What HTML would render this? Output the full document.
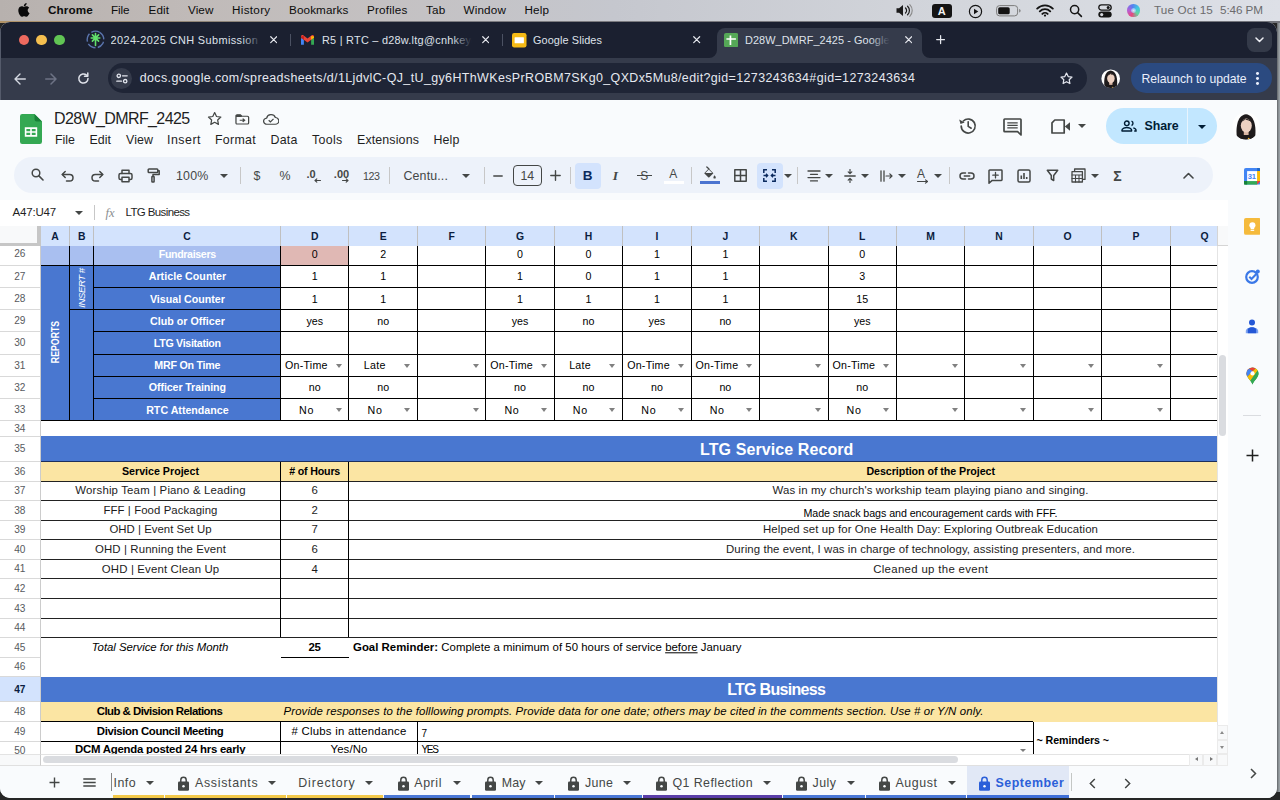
<!DOCTYPE html><html lang="en"><head><meta charset="utf-8"><title>D28W_DMRF_2425 - Google Sheets</title><style>
*{box-sizing:border-box;margin:0;padding:0}
html,body{width:1280px;height:800px;overflow:hidden}
body{background:#2a2a2c;font-family:"Liberation Sans",sans-serif;position:relative;color:#1f1f1f}
.a{position:absolute}
.t{position:absolute;white-space:nowrap;line-height:1;transform:translateY(-50%)}
#menubar{position:absolute;left:0;top:0;width:1280px;height:21px;background:linear-gradient(90deg,#b7b1ae 0%,#c0bab8 15%,#c4c1c2 30%,#c5c7ce 48%,#d3d6dc 75%,#dde0e7 100%)}
#gap{position:absolute;left:0;top:21px;width:1280px;height:1.500px;background:linear-gradient(90deg,#b39468 0%,#9a8a72 8%,#7d7c80 30%,#73757c 100%)}
#desk{position:absolute;left:0;top:21.5px;width:1280px;height:779px;background:#262626}
#deskr{position:absolute;left:1276.500px;top:21.500px;width:3.500px;height:770px;background:linear-gradient(90deg,#6f7377 0,#6f7377 35%,#9aa0a4 60%)}
#win{position:absolute;left:0;top:0;width:1277px;height:798px;clip-path:inset(22px 0 0 0 round 10px);background:#f9fbfd}
#tabstrip{position:absolute;left:0;top:22px;width:100%;height:36px;background:#1b2030}
#ctool{position:absolute;left:0;top:58px;width:100%;height:41.5px;background:#353b4b}
#grid{position:absolute;left:0;top:225.5px;width:1217px;height:528.5px;overflow:hidden;background:#fff}
#grid .in{position:absolute;left:0;top:-225.5px;width:1600px;height:800px}
.c{position:absolute}
.hl{position:absolute;height:1px;background:#000}
.vl{position:absolute;width:1px;background:#000}
</style></head><body>
<div id="desk"></div><div id="deskr"></div><div id="gap"></div>
<div id="menubar">
<svg class="a" style="left:17.200px;top:3.300px" width="13.800" height="13.800" viewBox="0 0 24 24"><path fill="#0a0a0a" d="M12.152 6.896c-.948 0-2.415-1.078-3.96-1.04-2.04.027-3.91 1.183-4.961 3.014-2.117 3.675-.546 9.103 1.519 12.09 1.013 1.454 2.208 3.09 3.792 3.039 1.52-.065 2.09-.987 3.935-.987 1.831 0 2.35.987 3.96.948 1.637-.026 2.676-1.48 3.676-2.948 1.156-1.688 1.636-3.325 1.662-3.415-.039-.013-3.182-1.221-3.22-4.857-.026-3.04 2.48-4.494 2.597-4.559-1.429-2.09-3.623-2.324-4.39-2.376-2-.156-3.675 1.09-4.61 1.09zM15.53 3.83c.843-1.012 1.4-2.427 1.245-3.83-1.207.052-2.662.805-3.532 1.818-.78.896-1.454 2.338-1.273 3.714 1.338.104 2.715-.688 3.559-1.701"/></svg>
<span class="t" style="left:48.00px;top:9.60px;color:#0c0c0c;font-size:11.7px;font-weight:bold;font-style:normal;letter-spacing:0.138px;transform:translate(0,-50%);">Chrome</span>
<span class="t" style="left:111.00px;top:9.60px;color:#0c0c0c;font-size:11.7px;font-weight:normal;font-style:normal;letter-spacing:-0.086px;transform:translate(0,-50%);">File</span>
<span class="t" style="left:148.50px;top:9.60px;color:#0c0c0c;font-size:11.7px;font-weight:normal;font-style:normal;letter-spacing:0.090px;transform:translate(0,-50%);">Edit</span>
<span class="t" style="left:188.00px;top:9.60px;color:#0c0c0c;font-size:11.7px;font-weight:normal;font-style:normal;letter-spacing:0.094px;transform:translate(0,-50%);">View</span>
<span class="t" style="left:232.00px;top:9.60px;color:#0c0c0c;font-size:11.7px;font-weight:normal;font-style:normal;letter-spacing:0.304px;transform:translate(0,-50%);">History</span>
<span class="t" style="left:289.00px;top:9.60px;color:#0c0c0c;font-size:11.7px;font-weight:normal;font-style:normal;letter-spacing:0.115px;transform:translate(0,-50%);">Bookmarks</span>
<span class="t" style="left:367.00px;top:9.60px;color:#0c0c0c;font-size:11.7px;font-weight:normal;font-style:normal;letter-spacing:0.189px;transform:translate(0,-50%);">Profiles</span>
<span class="t" style="left:426.00px;top:9.60px;color:#0c0c0c;font-size:11.7px;font-weight:normal;font-style:normal;letter-spacing:0.219px;transform:translate(0,-50%);">Tab</span>
<span class="t" style="left:463.50px;top:9.60px;color:#0c0c0c;font-size:11.7px;font-weight:normal;font-style:normal;letter-spacing:0.154px;transform:translate(0,-50%);">Window</span>
<span class="t" style="left:524.50px;top:9.60px;color:#0c0c0c;font-size:11.7px;font-weight:normal;font-style:normal;letter-spacing:0.113px;transform:translate(0,-50%);">Help</span>
<span class="t" style="left:1154.00px;top:9.80px;color:#6b6b6d;font-size:11.7px;font-weight:normal;font-style:normal;letter-spacing:0.161px;transform:translate(0,-50%);">Tue Oct 15</span>
<span class="t" style="left:1220.00px;top:9.80px;color:#6b6b6d;font-size:11.7px;font-weight:normal;font-style:normal;letter-spacing:-0.076px;transform:translate(0,-50%);">5:46 PM</span>
<svg class="a" style="left:895px;top:3px" width="20" height="15" viewBox="0 0 20 15"><path d="M1.5 5.2h2.6L8 2v11L4.1 9.8H1.5z" fill="#1a1a1a"/><path d="M10.5 5a3.4 3.4 0 0 1 0 5M12.6 3.2a6 6 0 0 1 0 8.6" fill="none" stroke="#1a1a1a" stroke-width="1.2" stroke-linecap="round"/><path d="M14.8 1.6a8.4 8.4 0 0 1 0 11.8" fill="none" stroke="#8a8a8a" stroke-width="1.1" stroke-linecap="round"/></svg>
<div class="a" style="left:932px;top:3.6px;width:19.5px;height:14.2px;border-radius:3px;background:#141414"></div>
<span class="t" style="left:941.80px;top:10.90px;color:#f2f2f2;font-size:11px;font-weight:bold;font-style:normal;letter-spacing:0.000px;transform:translate(-50%,-50%);">A</span>
<svg class="a" style="left:967.500px;top:3.500px" width="15" height="15" viewBox="0 0 15 15"><circle cx="7.5" cy="7.5" r="6.1" fill="none" stroke="#141414" stroke-width="1.2"/><path d="M6 4.7l4.3 2.8L6 10.3z" fill="#141414"/></svg>
<svg class="a" style="left:996px;top:5px" width="26" height="12" viewBox="0 0 26 12"><rect x=".6" y=".6" width="21" height="10.3" rx="3" fill="none" stroke="#7c7c7c" stroke-width="1"/><rect x="2.2" y="2.2" width="11.5" height="7.1" rx="1.6" fill="#141414"/><path d="M23.2 4v3.6c.9-.3 1.4-1 1.400-1.800s-.5-1.500-1.400-1.800z" fill="#7c7c7c"/></svg>
<svg class="a" style="left:1036px;top:4px" width="18" height="13" viewBox="0 0 18 13"><path d="M1.2 4.6a11 11 0 0 1 15.6 0M3.800 7.300a7.300 7.300 0 0 1 10.400 0M6.400 9.900a3.700 3.700 0 0 1 5.200 0" fill="none" stroke="#141414" stroke-width="1.9" stroke-linecap="round"/><circle cx="9" cy="11.600" r="1.1" fill="#141414"/></svg>
<svg class="a" style="left:1068.5px;top:4px" width="14" height="14" viewBox="0 0 14 14"><circle cx="5.6" cy="5.6" r="4.1" fill="none" stroke="#141414" stroke-width="1.5"/><path d="M8.700 8.700l3.700 3.700" stroke="#141414" stroke-width="1.6" stroke-linecap="round"/></svg>
<svg class="a" style="left:1098px;top:4px" width="14" height="14" viewBox="0 0 14 14"><rect x=".8" y=".8" width="12.4" height="5.4" rx="2.7" fill="none" stroke="#141414" stroke-width="1.3"/><circle cx="10.2" cy="3.5" r="1.5" fill="#141414"/><rect x=".3" y="7.600" width="13.4" height="6" rx="3" fill="#141414"/><circle cx="3.700" cy="10.600" r="1.600" fill="#d6d8de"/></svg>
<div class="a" style="left:1127px;top:4.3px;width:12.600px;height:12.600px;border-radius:50%;background:conic-gradient(from 200deg,#e8487c,#b55fd6,#5a7cf0,#3fc6e0,#62d6a0,#e8487c)"></div><div class="a" style="left:1130.500px;top:7.800px;width:5.600px;height:5.600px;border-radius:50%;background:radial-gradient(#fff,#9fd0ff 60%,rgba(255,255,255,0) 100%);opacity:.75"></div>
</div>
<div id="win"><div id="tabstrip"></div><div id="ctool"></div>
<div class="a" style="left:18.6px;top:34.6px;width:10.800px;height:10.800px;border-radius:50%;background:#ee6a5f"></div>
<div class="a" style="left:36.3px;top:34.6px;width:10.800px;height:10.800px;border-radius:50%;background:#f5bf4f"></div>
<div class="a" style="left:54.1px;top:34.6px;width:10.800px;height:10.800px;border-radius:50%;background:#61c554"></div>
<div class="a" style="left:716.700px;top:28px;width:205.500px;height:30px;background:#353b4b;border-radius:8px 8px 0 0"></div>
<svg class="a" style="left:708.700px;top:50px" width="8" height="8" viewBox="0 0 8 8"><path d="M8 0v8H0a8 8 0 0 0 8-8z" fill="#353b4b"/></svg>
<svg class="a" style="left:922.200px;top:50px" width="8" height="8" viewBox="0 0 8 8"><path d="M0 0v8h8a8 8 0 0 1-8-8z" fill="#353b4b"/></svg>
<div class="a" style="left:290.0px;top:33.700px;width:1.1px;height:12.600px;background:#4b5162"></div>
<div class="a" style="left:501.5px;top:33.700px;width:1.1px;height:12.600px;background:#4b5162"></div>
<svg class="a" style="left:86.400px;top:30.300px" width="19" height="19" viewBox="0 0 19 19"><circle cx="9.500" cy="9.500" r="8.300" fill="none" stroke="#5a74ad" stroke-width="1.400" stroke-dasharray="8.500 2.300" transform="rotate(-60 9.500 9.500)"/><g stroke="#62e06c" stroke-width="1.600" stroke-linecap="round"><path d="M9.500 3.600v11.800M5.200 8h8.600M6.400 4.900l6.200 6.200M12.600 4.900l-6.200 6.200"/></g></svg>
<svg class="a" style="left:301px;top:35px" width="13" height="9.800" viewBox="0 0 14 10.600" preserveAspectRatio="none"><path d="M0 1.500v9h3.100V5.200L0 2.900z" fill="#4285f4"/><path d="M14 1.500v9h-3.100V5.200L14 2.900z" fill="#34a853"/><path d="M0 1.600C0 .3 1.500-.4 2.500.4L7 3.800 11.500.4c1-.8 2.500-.1 2.500 1.200v1.300L7 8.100 0 2.900z" fill="#ea4335"/><path d="M0 1.600v1.300l3.100 2.300V1z" fill="#c5221f"/><path d="M14 1.600v1.300l-3.100 2.300V1z" fill="#fbbc04"/></svg>
<svg class="a" style="left:512px;top:33px" width="14.500" height="14.500" viewBox="0 0 14.500 14.500"><rect width="14.500" height="14.500" rx="2.200" fill="#f5ba15"/><rect x="2.600" y="4.200" width="9.300" height="6.100" rx=".5" fill="#fff"/></svg>
<svg class="a" style="left:723.700px;top:33px" width="14.300" height="14.300" viewBox="0 0 14.300 14.300"><rect width="14.300" height="14.300" rx="2" fill="#55a857"/><path d="M5.600 2.400h1.700v9.500H5.600zM2.400 5.200h9.500v1.600H2.400z" fill="#fff"/></svg>
<div class="a" style="left:110.5px;top:31px;width:153px;height:18px;overflow:hidden">
<span class="t" style="left:0.00px;top:9.30px;color:#dfe2ea;font-size:10.9px;font-weight:normal;font-style:normal;letter-spacing:0.402px;transform:translate(0,-50%);">2024-2025 CNH Submission Site</span>
<div class="a" style="right:0;top:0;width:22px;height:18px;background:linear-gradient(90deg,rgba(0,0,0,0),#1b2030 90%)"></div></div>
<div class="a" style="left:322px;top:31px;width:152px;height:18px;overflow:hidden">
<span class="t" style="left:0.00px;top:9.30px;color:#dfe2ea;font-size:10.9px;font-weight:normal;font-style:normal;letter-spacing:0.254px;transform:translate(0,-50%);">R5 | RTC – d28w.ltg@cnhkeyclub.org</span>
<div class="a" style="right:0;top:0;width:22px;height:18px;background:linear-gradient(90deg,rgba(0,0,0,0),#1b2030 90%)"></div></div>
<div class="a" style="left:533px;top:31px;width:150px;height:18px;overflow:hidden">
<span class="t" style="left:0.00px;top:9.30px;color:#dfe2ea;font-size:10.9px;font-weight:normal;font-style:normal;letter-spacing:0.091px;transform:translate(0,-50%);">Google Slides</span>
<div class="a" style="right:0;top:0;width:22px;height:18px;background:linear-gradient(90deg,rgba(0,0,0,0),#1b2030 90%)"></div></div>
<div class="a" style="left:745px;top:31px;width:147px;height:18px;overflow:hidden">
<span class="t" style="left:0.00px;top:9.30px;color:#dfe2ea;font-size:10.9px;font-weight:normal;font-style:normal;letter-spacing:0.074px;transform:translate(0,-50%);">D28W_DMRF_2425 - Google Sheets</span>
<div class="a" style="right:0;top:0;width:22px;height:18px;background:linear-gradient(90deg,rgba(0,0,0,0),#353b4b 90%)"></div></div>
<svg class="a" style="left:270.0px;top:36.300px" width="7.400" height="7.400" viewBox="0 0 8 8"><path d="M.8.800l6.400 6.400M7.200.800L.8 7.200" stroke="#e6e8ee" stroke-width="1.300" stroke-linecap="round"/></svg>
<svg class="a" style="left:481.5px;top:36.300px" width="7.400" height="7.400" viewBox="0 0 8 8"><path d="M.8.800l6.400 6.400M7.200.800L.8 7.200" stroke="#e6e8ee" stroke-width="1.300" stroke-linecap="round"/></svg>
<svg class="a" style="left:693.3px;top:36.300px" width="7.400" height="7.400" viewBox="0 0 8 8"><path d="M.8.800l6.400 6.400M7.200.800L.8 7.200" stroke="#e6e8ee" stroke-width="1.300" stroke-linecap="round"/></svg>
<svg class="a" style="left:905.0px;top:36.300px" width="7.400" height="7.400" viewBox="0 0 8 8"><path d="M.8.800l6.400 6.400M7.200.800L.8 7.200" stroke="#e6e8ee" stroke-width="1.300" stroke-linecap="round"/></svg>
<svg class="a" style="left:935.900px;top:35.400px" width="9.200" height="9.200" viewBox="0 0 11 11"><path d="M5.500.800v9.400M.8 5.500h9.400" stroke="#e6e8ee" stroke-width="1.500" stroke-linecap="round"/></svg>
<div class="a" style="left:1247px;top:27.700px;width:25px;height:24.500px;border-radius:7.500px;background:#343a49"></div>
<svg class="a" style="left:1255px;top:37px" width="9" height="6" viewBox="0 0 9 6"><path d="M1 1l3.500 3.500L8 1" fill="none" stroke="#eef0f5" stroke-width="1.500" stroke-linecap="round" stroke-linejoin="round"/></svg>
<svg class="a" style="left:13.500px;top:72.500px" width="12" height="12" viewBox="0 0 12 12"><path d="M6 1L1 6l5 5M1.300 6H11.300" fill="none" stroke="#d5d9e2" stroke-width="1.350" stroke-linecap="round" stroke-linejoin="round"/></svg>
<svg class="a" style="left:45px;top:72.500px" width="12" height="12" viewBox="0 0 12 12"><path d="M6 1l5 5-5 5M10.700 6H.7" fill="none" stroke="#6d7385" stroke-width="1.500" stroke-linecap="round" stroke-linejoin="round"/></svg>
<svg class="a" style="left:77px;top:71.500px" width="13" height="13" viewBox="0 0 13 13"><path d="M11 6.500a4.600 4.600 0 1 1-1.500-3.400" fill="none" stroke="#dfe2ea" stroke-width="1.500" stroke-linecap="round"/><path d="M10.800 1v3.300H7.500" fill="none" stroke="#dfe2ea" stroke-width="1.500" stroke-linecap="round" stroke-linejoin="round"/></svg>
<div class="a" style="left:107.500px;top:62.700px;width:979px;height:30.500px;border-radius:15.250px;background:#1f2536"></div>
<div class="a" style="left:111px;top:67.500px;width:21px;height:21px;border-radius:50%;background:#353b4b"></div>
<svg class="a" style="left:115.500px;top:72.500px" width="12" height="11" viewBox="0 0 12 11"><g fill="none" stroke="#e3e6ee" stroke-width="1.300" stroke-linecap="round"><circle cx="2.800" cy="2.800" r="1.700"/><path d="M6.500 2.800h4.700M.8 8.200h4.700"/><circle cx="9.200" cy="8.200" r="1.700"/></g></svg>
<span class="t" style="left:139.70px;top:78.20px;color:#e6e9f0;font-size:12.45px;font-weight:normal;font-style:normal;letter-spacing:0.394px;transform:translate(0,-50%);">docs.google.com/spreadsheets/d/1LjdvlC-QJ_tU_gy6HThWKesPrROBM7SKg0_QXDx5Mu8/edit?gid=1273243634#gid=1273243634</span>
<svg class="a" style="left:1058.500px;top:70.500px" width="15" height="15" viewBox="0 0 24 24"><path d="M12 3.300l2.700 5.600 6.100.8-4.500 4.200 1.100 6.100L12 17.100 6.600 20l1.100-6.100L3.200 9.700l6.100-.8z" fill="none" stroke="#e3e6ee" stroke-width="2" stroke-linejoin="round"/></svg>
<svg class="a" style="left:1097.4px;top:64.8px" width="27.4" height="27.4" viewBox="0 0 40 40"><defs><clipPath id="avc2"><circle cx="20" cy="20" r="13.600"/></clipPath></defs><circle cx="20" cy="20" r="13.600" fill="#fefefe"/><g clip-path="url(#avc2)"><path d="M11 31.500C9.600 23 10.800 9 20 8.200 29.200 9 30.400 23 29 31.500 27 34 13 34 11 31.500z" fill="#1f1b1c"/><rect x="17.800" y="24" width="4.800" height="5" fill="#d9b5a3"/><ellipse cx="20.300" cy="19.600" rx="5.500" ry="7" fill="#ecd0c1"/><path d="M14.300 17.500C15.500 11.800 24.500 11 26.300 17.500 24.500 13.800 21 14.800 19.500 13.300 18 15 15.500 15 14.300 17.500z" fill="#1f1b1c"/><path d="M12 34.500C13.500 28.800 17.500 28.500 20.300 30.300 23 28.500 27 28.800 28.500 34.500z" fill="#1c1819"/><circle cx="22.700" cy="32.700" r=".900" fill="#f2b632"/></g></svg>
<div class="a" style="left:1130.600px;top:63px;width:141.400px;height:30px;border-radius:15px;background:#2b4a80"></div>
<span class="t" style="left:1141.50px;top:79.00px;color:#e9eefb;font-size:12.2px;font-weight:normal;font-style:normal;letter-spacing:-0.040px;transform:translate(0,-50%);">Relaunch to update</span>
<div class="a" style="left:1256px;top:71.85px;width:2.900px;height:2.900px;border-radius:50%;background:#e9eefb"></div>
<div class="a" style="left:1256px;top:77.05px;width:2.900px;height:2.900px;border-radius:50%;background:#e9eefb"></div>
<div class="a" style="left:1256px;top:82.25px;width:2.900px;height:2.900px;border-radius:50%;background:#e9eefb"></div>
<div class="a" style="left:0;top:30px;width:1px;height:69.500px;background:#555b6b"></div>
<svg class="a" style="left:19.500px;top:113.700px" width="22" height="30" viewBox="0 0 22 30"><path d="M2.200 0h12.300L22 7.500v20.300A2.200 2.200 0 0 1 19.800 30H2.200A2.200 2.200 0 0 1 0 27.800V2.200A2.200 2.200 0 0 1 2.200 0z" fill="#34a853"/><path d="M14.500 0L22 7.500h-5.300a2.200 2.200 0 0 1-2.200-2.200z" fill="#188038"/><path d="M4.800 13.300h12.400v9.400H4.800zM6.400 14.900v2.300h3.800v-2.300zm5.400 0v2.300h3.800v-2.300zM6.400 18.800v2.300h3.800v-2.300zm5.400 0v2.300h3.800v-2.300z" fill="#fff" fill-rule="evenodd"/></svg>
<span class="t" style="left:54.00px;top:118.70px;color:#1f1f1f;font-size:16px;font-weight:normal;font-style:normal;letter-spacing:-0.612px;transform:translate(0,-50%);">D28W_DMRF_2425</span>
<svg class="a" style="left:205.500px;top:110.300px" width="17.300" height="17.300" viewBox="0 0 24 24"><path d="M12 3.500l2.600 5.500 6 .8-4.400 4.100 1.100 6L12 17l-5.300 2.900 1.100-6L3.400 9.800l6-.8z" fill="none" stroke="#444746" stroke-width="1.700" stroke-linejoin="round"/></svg>
<svg class="a" style="left:235.400px;top:114px" width="14.600" height="11" viewBox="0 0 15 13" preserveAspectRatio="none"><path d="M1 2.200c0-.7.500-1.200 1.200-1.200h3.300l1.500 1.600h5.800c.7 0 1.200.5 1.200 1.200v6.900c0 .7-.5 1.200-1.200 1.200H2.200c-.7 0-1.200-.5-1.200-1.200z" fill="none" stroke="#444746" stroke-width="1.300"/><path d="M1 2.200c0-.7.500-1.200 1.200-1.200h3.300l1.500 1.600v.9H1z" fill="#444746"/><path d="M4.800 7.400h4.800M7.900 5.400l2 2-2 2" fill="none" stroke="#444746" stroke-width="1.400"/></svg>
<svg class="a" style="left:262.800px;top:113.500px" width="16.400" height="11" viewBox="0 0 17 12" preserveAspectRatio="none"><path d="M4.300 11.200a3.400 3.400 0 0 1-.5-6.800 4.700 4.700 0 0 1 9-.6 3.700 3.700 0 0 1-.2 7.400z" fill="none" stroke="#444746" stroke-width="1.300"/><path d="M5.900 6.800l1.800 1.800 3.200-3.300" fill="none" stroke="#444746" stroke-width="1.300"/></svg>
<span class="t" style="left:55.00px;top:140.00px;color:#1f1f1f;font-size:12.4px;font-weight:normal;font-style:normal;letter-spacing:0.008px;transform:translate(0,-50%);">File</span>
<span class="t" style="left:89.50px;top:140.00px;color:#1f1f1f;font-size:12.4px;font-weight:normal;font-style:normal;letter-spacing:0.035px;transform:translate(0,-50%);">Edit</span>
<span class="t" style="left:126.00px;top:140.00px;color:#1f1f1f;font-size:12.4px;font-weight:normal;font-style:normal;letter-spacing:0.090px;transform:translate(0,-50%);">View</span>
<span class="t" style="left:167.00px;top:140.00px;color:#1f1f1f;font-size:12.4px;font-weight:normal;font-style:normal;letter-spacing:0.500px;transform:translate(0,-50%);">Insert</span>
<span class="t" style="left:215.00px;top:140.00px;color:#1f1f1f;font-size:12.4px;font-weight:normal;font-style:normal;letter-spacing:0.292px;transform:translate(0,-50%);">Format</span>
<span class="t" style="left:270.50px;top:140.00px;color:#1f1f1f;font-size:12.4px;font-weight:normal;font-style:normal;letter-spacing:0.203px;transform:translate(0,-50%);">Data</span>
<span class="t" style="left:312.00px;top:140.00px;color:#1f1f1f;font-size:12.4px;font-weight:normal;font-style:normal;letter-spacing:0.312px;transform:translate(0,-50%);">Tools</span>
<span class="t" style="left:357.00px;top:140.00px;color:#1f1f1f;font-size:12.4px;font-weight:normal;font-style:normal;letter-spacing:0.138px;transform:translate(0,-50%);">Extensions</span>
<span class="t" style="left:433.50px;top:140.00px;color:#1f1f1f;font-size:12.4px;font-weight:normal;font-style:normal;letter-spacing:0.129px;transform:translate(0,-50%);">Help</span>
<svg class="a" style="left:958px;top:116px" width="20" height="20" viewBox="0 0 20 20"><path d="M3.200 10a7 7 0 1 0 2.100-5" fill="none" stroke="#444746" stroke-width="1.700" stroke-linecap="round"/><path d="M1.200 3.600l1.300 4.300 4.200-1.400z" fill="#444746"/><path d="M10.200 5.800v4.600l3 1.800" fill="none" stroke="#444746" stroke-width="1.600" stroke-linecap="round"/></svg>
<svg class="a" style="left:1003px;top:117.500px" width="19" height="18" viewBox="0 0 19 18"><path d="M1.700 1h15.600c.4 0 .7.300.7.700V17l-3.400-3.300H1.700c-.4 0-.7-.3-.7-.7V1.700c0-.4.300-.7.700-.7z" fill="none" stroke="#444746" stroke-width="1.700" stroke-linejoin="round"/><path d="M4.300 4.900h10.400M4.300 7.400h10.400M4.300 9.900h10.400" stroke="#444746" stroke-width="1.300"/></svg>
<svg class="a" style="left:1051px;top:118.500px" width="20" height="15" viewBox="0 0 20 15"><path d="M3.800 1h9.400v13H1V3.800z" fill="none" stroke="#444746" stroke-width="1.700" stroke-linejoin="round"/><path d="M13.800 7.500L19 3.200v8.600z" fill="#444746"/></svg>
<div class="a" style="left:1078.200px;top:124.400px;border-left:4.100px solid transparent;border-right:4.100px solid transparent;border-top:4.100px solid #444746"></div>
<div class="a" style="left:1106px;top:108.100px;width:110.500px;height:35.500px;border-radius:17.750px;background:#c2e7ff"></div>
<div class="a" style="left:1186.700px;top:108.100px;width:1px;height:35.500px;background:#e8f4fd"></div>
<svg class="a" style="left:1121px;top:119.500px" width="16" height="12" viewBox="0 0 16 12"><circle cx="5.800" cy="3.300" r="2.300" fill="none" stroke="#001d35" stroke-width="1.400"/><path d="M1 11v-.9c0-1.700 3.200-2.600 4.800-2.600s4.800.9 4.800 2.600v.9z" fill="none" stroke="#001d35" stroke-width="1.400" stroke-linejoin="round"/><path d="M10.500 1.200a2.300 2.300 0 0 1 0 4.300M12.300 7.900c1.500.4 2.700 1.100 2.700 2.200v.9h-1.800" fill="none" stroke="#001d35" stroke-width="1.400"/></svg>
<span class="t" style="left:1144.50px;top:126.20px;color:#001d35;font-size:12.4px;font-weight:bold;font-style:normal;letter-spacing:-0.087px;transform:translate(0,-50%);">Share</span>
<div class="a" style="left:1197.600px;top:124.600px;border-left:4.100px solid transparent;border-right:4.100px solid transparent;border-top:4.200px solid #001d35"></div>
<svg class="a" style="left:1226.2px;top:106px" width="40" height="40" viewBox="0 0 40 40"><defs><clipPath id="avc1"><circle cx="20" cy="20" r="13.600"/></clipPath></defs><circle cx="20" cy="20" r="13.600" fill="#fefefe"/><g clip-path="url(#avc1)"><path d="M11 31.500C9.600 23 10.800 9 20 8.200 29.200 9 30.400 23 29 31.500 27 34 13 34 11 31.500z" fill="#1f1b1c"/><rect x="17.800" y="24" width="4.800" height="5" fill="#d9b5a3"/><ellipse cx="20.300" cy="19.600" rx="5.500" ry="7" fill="#ecd0c1"/><path d="M14.300 17.500C15.500 11.800 24.500 11 26.300 17.500 24.500 13.800 21 14.800 19.500 13.300 18 15 15.500 15 14.300 17.500z" fill="#1f1b1c"/><path d="M12 34.500C13.500 28.800 17.500 28.500 20.300 30.300 23 28.500 27 28.800 28.500 34.500z" fill="#1c1819"/><circle cx="22.700" cy="32.700" r=".900" fill="#f2b632"/></g></svg>
<div class="a" style="left:14px;top:157.100px;width:1199px;height:36.100px;border-radius:18.050px;background:#edf2fa"></div>
<svg class="a" style="left:31.20px;top:168.30px" width="13" height="13" viewBox="0 0 13 13" fill="none" stroke="#444746" stroke-width="1.500" stroke-linecap="round" stroke-linejoin="round"><circle cx="5" cy="5" r="3.800"/><path d="M7.900 7.900l4.100 4.100" stroke-width="1.600"/></svg>
<svg class="a" style="left:61.00px;top:169.50px" width="14" height="12" viewBox="0 0 14 12" fill="none" stroke="#444746" stroke-width="1.500" stroke-linecap="round" stroke-linejoin="round"><path d="M4.200 1.500L1.200 4.500l3 3"/><path d="M1.500 4.500h7.200a3.300 3.300 0 0 1 0 6.600H5.500"/></svg>
<svg class="a" style="left:89.50px;top:169.50px" width="14" height="12" viewBox="0 0 14 12" fill="none" stroke="#444746" stroke-width="1.500" stroke-linecap="round" stroke-linejoin="round"><path d="M9.800 1.500l3 3-3 3"/><path d="M12.500 4.500H5.300a3.300 3.300 0 0 0 0 6.600h3.200"/></svg>
<svg class="a" style="left:117.50px;top:168.50px" width="15" height="14" viewBox="0 0 15 14" fill="none" stroke="#444746" stroke-width="1.500" stroke-linecap="round" stroke-linejoin="round"><path d="M4 4.500V1.200h7v3.300"/><rect x="1" y="4.500" width="13" height="6" rx="1.500"/><rect x="4" y="8.300" width="7" height="4.500" fill="#edf2fa"/></svg>
<svg class="a" style="left:146.00px;top:168.00px" width="14" height="15" viewBox="0 0 14 15" fill="none" stroke="#444746" stroke-width="1.500" stroke-linecap="round" stroke-linejoin="round"><rect x="2.200" y="1" width="9.600" height="3.600" rx=".8"/><path d="M11.800 2.800h1.400v3.600H7v2.200"/><rect x="5.900" y="8.600" width="2.200" height="5.400" rx=".5"/></svg>
<span class="t" style="left:176.00px;top:175.80px;color:#444746;font-size:12.4px;font-weight:normal;font-style:normal;letter-spacing:0.199px;transform:translate(0,-50%);">100%</span>
<div class="a" style="left:219.90px;top:173.90px;border-left:4.100px solid transparent;border-right:4.100px solid transparent;border-top:4.100px solid #444746"></div>
<div class="a" style="left:239.50px;top:166.600px;width:1px;height:17.800px;background:#c7c7c7"></div>
<span class="t" style="left:257.00px;top:175.50px;color:#444746;font-size:12.4px;font-weight:normal;font-style:normal;letter-spacing:0.000px;transform:translate(-50%,-50%);">$</span>
<span class="t" style="left:285.00px;top:175.50px;color:#444746;font-size:12.4px;font-weight:normal;font-style:normal;letter-spacing:0.000px;transform:translate(-50%,-50%);">%</span>
<span class="t" style="left:311.00px;top:174.00px;color:#444746;font-size:11px;font-weight:bold;font-style:normal;letter-spacing:0.000px;transform:translate(-50%,-50%);">.0</span>
<svg class="a" style="left:313.50px;top:178.00px" width="7" height="5" viewBox="0 0 7 5" fill="none" stroke="#444746" stroke-width="1.500" stroke-linecap="round" stroke-linejoin="round"><path d="M6.500 2.500H1M2.800.800L1 2.500l1.800 1.700" stroke-width="1.100"/></svg>
<span class="t" style="left:341.50px;top:174.00px;color:#444746;font-size:11px;font-weight:bold;font-style:normal;letter-spacing:0.000px;transform:translate(-50%,-50%);">.00</span>
<svg class="a" style="left:341.50px;top:178.00px" width="7" height="5" viewBox="0 0 7 5" fill="none" stroke="#444746" stroke-width="1.500" stroke-linecap="round" stroke-linejoin="round"><path d="M.5 2.500H6M4.200.800L6 2.500 4.200 4.200" stroke-width="1.100"/></svg>
<span class="t" style="left:363.00px;top:175.50px;color:#444746;font-size:10.7px;font-weight:normal;font-style:normal;letter-spacing:-0.448px;transform:translate(0,-50%);">123</span>
<div class="a" style="left:389.00px;top:166.600px;width:1px;height:17.800px;background:#c7c7c7"></div>
<span class="t" style="left:403.50px;top:175.50px;color:#444746;font-size:12.4px;font-weight:normal;font-style:normal;letter-spacing:0.137px;transform:translate(0,-50%);">Centu...</span>
<div class="a" style="left:461.90px;top:173.90px;border-left:4.100px solid transparent;border-right:4.100px solid transparent;border-top:4.100px solid #444746"></div>
<div class="a" style="left:483.50px;top:166.600px;width:1px;height:17.800px;background:#c7c7c7"></div>
<svg class="a" style="left:493.00px;top:174.50px" width="10" height="2" viewBox="0 0 10 2" fill="none" stroke="#444746" stroke-width="1.500" stroke-linecap="round" stroke-linejoin="round"><path d="M.8 1h8.400" stroke-width="1.400"/></svg>
<div class="a" style="left:512.500px;top:165px;width:29.500px;height:21px;border:1px solid #444746;border-radius:4px"></div>
<span class="t" style="left:527.30px;top:175.70px;color:#444746;font-size:12.4px;font-weight:normal;font-style:normal;letter-spacing:0.000px;transform:translate(-50%,-50%);">14</span>
<svg class="a" style="left:549.50px;top:170.00px" width="11" height="11" viewBox="0 0 11 11" fill="none" stroke="#444746" stroke-width="1.500" stroke-linecap="round" stroke-linejoin="round"><path d="M5.500.800v9.400M.8 5.500h9.400" stroke-width="1.400"/></svg>
<div class="a" style="left:570.00px;top:166.600px;width:1px;height:17.800px;background:#c7c7c7"></div>
<div class="a" style="left:574.500px;top:162.500px;width:26px;height:26px;border-radius:4px;background:#d3e3fd"></div>
<span class="t" style="left:587.50px;top:175.80px;color:#0b2a5e;font-size:13.5px;font-weight:bold;font-style:normal;letter-spacing:0.000px;transform:translate(-50%,-50%);">B</span>
<span class="t" style="left:615.50px;top:175.80px;color:#444746;font-size:13.5px;font-weight:bold;font-style:italic;letter-spacing:0.000px;transform:translate(-50%,-50%);font-family:'Liberation Serif',serif;">I</span>
<span class="t" style="left:644.30px;top:175.80px;color:#444746;font-size:12px;font-weight:normal;font-style:normal;letter-spacing:0.000px;transform:translate(-50%,-50%);">S</span>
<div class="a" style="left:637px;top:175.1px;width:14.500px;height:1.300px;background:#444746"></div>
<span class="t" style="left:673.20px;top:173.70px;color:#444746;font-size:12px;font-weight:normal;font-style:normal;letter-spacing:0.000px;transform:translate(-50%,-50%);">A</span>
<div class="a" style="left:663.500px;top:181.300px;width:20px;height:2.700px;background:#fff"></div>
<div class="a" style="left:691.00px;top:166.600px;width:1px;height:17.800px;background:#c7c7c7"></div>
<svg class="a" style="left:701.00px;top:166.00px" width="16" height="14" viewBox="0 0 16 14" fill="none" stroke="#444746" stroke-width="1.500" stroke-linecap="round" stroke-linejoin="round"><path d="M3.200 7.200L7.800 2.600l4.600 4.600-4 4a.9.900 0 0 1-1.200 0z" fill="#444746" stroke="none"/><path d="M5.800 1l2 1.800" stroke-width="1.300"/><path d="M4.400 7h6.800L7.800 3.600z" fill="#edf2fa" stroke="none"/><path d="M13.600 9.200s1.200 1.400 1.200 2.200a1.200 1.200 0 0 1-2.400 0c0-.8 1.200-2.200 1.200-2.200z" fill="#444746" stroke="none"/></svg>
<div class="a" style="left:700px;top:181.300px;width:20px;height:2.700px;background:#4b74d0"></div>
<svg class="a" style="left:733.50px;top:169.00px" width="13" height="13" viewBox="0 0 13 13" fill="none" stroke="#444746" stroke-width="1.500" stroke-linecap="round" stroke-linejoin="round"><rect x=".8" y=".8" width="11.400" height="11.400"/><path d="M6.500.800v11.400M.8 6.500h11.400"/></svg>
<div class="a" style="left:756.800px;top:162.500px;width:26.200px;height:26px;border-radius:4px;background:#d3e3fd"></div>
<svg class="a" style="left:763px;top:169px" width="13" height="13" viewBox="0 0 13 13" fill="none" stroke="#0b2a5e" stroke-width="1.500"><path d="M.8 4V.8H4M9 .8h3.200V4M12.200 9v3.200H9M4 12.200H.8V9"/><path d="M.5 6.500h4M3 4.800l1.700 1.700L3 8.200M12.500 6.500h-4M10 4.800L8.300 6.500 10 8.200" stroke-width="1.300"/></svg>
<div class="a" style="left:783.90px;top:173.90px;border-left:4.100px solid transparent;border-right:4.100px solid transparent;border-top:4.100px solid #444746"></div>
<div class="a" style="left:797.00px;top:166.600px;width:1px;height:17.800px;background:#c7c7c7"></div>
<svg class="a" style="left:806.50px;top:169.50px" width="14" height="12" viewBox="0 0 14 12" fill="none" stroke="#444746" stroke-width="1.500" stroke-linecap="round" stroke-linejoin="round"><path d="M1 1h12M3.500 4.300h7M1 7.600h12M3.500 10.900h7" stroke-width="1.300"/></svg>
<div class="a" style="left:824.90px;top:173.90px;border-left:4.100px solid transparent;border-right:4.100px solid transparent;border-top:4.100px solid #444746"></div>
<svg class="a" style="left:843.50px;top:168.50px" width="12" height="14" viewBox="0 0 12 14" fill="none" stroke="#444746" stroke-width="1.500" stroke-linecap="round" stroke-linejoin="round"><path d="M.8 7h10.400" stroke-width="1.300"/><path d="M6 .5v3.800M4.200 2.800L6 4.600l1.800-1.800M6 13.500V9.700M4.200 11.200L6 9.400l1.800 1.800" stroke-width="1.200"/></svg>
<div class="a" style="left:861.40px;top:173.90px;border-left:4.100px solid transparent;border-right:4.100px solid transparent;border-top:4.100px solid #444746"></div>
<svg class="a" style="left:879.50px;top:169.50px" width="13" height="12" viewBox="0 0 13 12" fill="none" stroke="#444746" stroke-width="1.500" stroke-linecap="round" stroke-linejoin="round"><path d="M1 .8v10.400M4 .8v10.400" stroke-width="1.300"/><path d="M6 6h6M9.800 3.800L12 6 9.800 8.200" stroke-width="1.200"/></svg>
<div class="a" style="left:897.90px;top:173.90px;border-left:4.100px solid transparent;border-right:4.100px solid transparent;border-top:4.100px solid #444746"></div>
<span class="t" style="left:921.00px;top:174.00px;color:#444746;font-size:12px;font-weight:normal;font-style:normal;letter-spacing:0.000px;transform:translate(-50%,-50%);">A</span>
<svg class="a" style="left:916.50px;top:179.00px" width="12" height="5" viewBox="0 0 12 5" fill="none" stroke="#444746" stroke-width="1.500" stroke-linecap="round" stroke-linejoin="round"><path d="M.5 2.500h10M8.500.800l2 1.700-2 1.700" stroke-width="1.100"/></svg>
<div class="a" style="left:934.40px;top:173.90px;border-left:4.100px solid transparent;border-right:4.100px solid transparent;border-top:4.100px solid #444746"></div>
<div class="a" style="left:949.00px;top:166.600px;width:1px;height:17.800px;background:#c7c7c7"></div>
<svg class="a" style="left:959.00px;top:171.50px" width="16" height="8" viewBox="0 0 16 8" fill="none" stroke="#444746" stroke-width="1.500" stroke-linecap="round" stroke-linejoin="round"><path d="M6.500 1H4a3 3 0 0 0 0 6h2.500M9.500 1H12a3 3 0 0 1 0 6H9.500M5.300 4h5.400"/></svg>
<svg class="a" style="left:987.50px;top:168.50px" width="15" height="15" viewBox="0 0 15 15" fill="none" stroke="#444746" stroke-width="1.500" stroke-linecap="round" stroke-linejoin="round"><path d="M1.700 1h11.600c.4 0 .7.300.7.700v9c0 .4-.3.700-.7.700H4.200L1 14.200V1.700c0-.4.300-.7.700-.7z"/><path d="M7.500 3.500v5.400M4.800 6.200h5.400" stroke-width="1.300"/></svg>
<svg class="a" style="left:1016.50px;top:168.50px" width="14" height="14" viewBox="0 0 14 14" fill="none" stroke="#444746" stroke-width="1.500" stroke-linecap="round" stroke-linejoin="round"><rect x="1" y="1" width="12" height="12" rx="1.500"/><path d="M4.300 10V6.500M7 10V4M9.700 10V8" stroke-width="1.600" stroke-linecap="butt"/></svg>
<svg class="a" style="left:1045.50px;top:169.00px" width="13" height="13" viewBox="0 0 13 13" fill="none" stroke="#444746" stroke-width="1.500" stroke-linecap="round" stroke-linejoin="round"><path d="M1.300 1.300h10.400L7.700 6.500v5l-2.400-1.500v-3.500z"/></svg>
<svg class="a" style="left:1071.00px;top:168.00px" width="15" height="15" viewBox="0 0 15 15" fill="none" stroke="#444746" stroke-width="1.500" stroke-linecap="round" stroke-linejoin="round"><path d="M3.600 3.400V1h10.400v10.400h-2.300" stroke-width="1.300"/><rect x="1" y="3.600" width="10.400" height="10.400" stroke-width="1.300"/><path d="M1 7h10.400M1 10.500h10.400M4.500 7v7M8 7v7" stroke-width="1.100"/></svg>
<div class="a" style="left:1090.90px;top:173.90px;border-left:4.100px solid transparent;border-right:4.100px solid transparent;border-top:4.100px solid #444746"></div>
<span class="t" style="left:1117.50px;top:175.80px;color:#444746;font-size:14px;font-weight:bold;font-style:normal;letter-spacing:0.000px;transform:translate(-50%,-50%);">Σ</span>
<svg class="a" style="left:1182.50px;top:172.00px" width="11" height="7" viewBox="0 0 11 7" fill="none" stroke="#444746" stroke-width="1.500" stroke-linecap="round" stroke-linejoin="round"><path d="M1 6l4.500-4.500L10 6" stroke-width="1.600"/></svg>
<div class="a" style="left:0;top:199.500px;width:1227.500px;height:26px;background:#fff"></div>
<span class="t" style="left:12.50px;top:213.00px;color:#1f1f1f;font-size:11.5px;font-weight:normal;font-style:normal;letter-spacing:-0.181px;transform:translate(0,-50%);">A47:U47</span>
<div class="a" style="left:75.40px;top:211.10px;border-left:4.100px solid transparent;border-right:4.100px solid transparent;border-top:4.100px solid #444746"></div>
<div class="a" style="left:94.200px;top:205px;width:1px;height:15px;background:#c7c7c7"></div>
<span class="t" style="left:110.00px;top:212.80px;color:#8a8d90;font-size:12.5px;font-weight:normal;font-style:italic;letter-spacing:0.000px;transform:translate(-50%,-50%);font-family:'Liberation Serif',serif;">fx</span>
<span class="t" style="left:125.50px;top:213.00px;color:#1f1f1f;font-size:11.5px;font-weight:normal;font-style:normal;letter-spacing:-0.615px;transform:translate(0,-50%);">LTG Business</span>
<svg class="a" style="left:1243.8px;top:168.400px" width="16.600" height="16.600" viewBox="0 0 16 16"><rect width="16" height="16" rx="1.800" fill="#4285f4"/><rect x="0" y="12.600" width="12.600" height="3.400" fill="#34a853"/><path d="M0 12.600h3v3.400H1.800A1.800 1.800 0 0 1 0 14.200z" fill="#188038"/><rect x="12.600" y="0" width="3.400" height="12.600" fill="#fbbc04"/><path d="M12.600 0h1.600A1.800 1.800 0 0 1 16 1.800V3h-3.400z" fill="#1967d2"/><path d="M12.600 12.600H16L12.600 16z" fill="#ea4335"/><rect x="3" y="3" width="9.600" height="9.600" fill="#fff"/></svg>
<span class="t" style="left:1251.70px;top:176.80px;color:#4285f4;font-size:7.6px;font-weight:bold;font-style:normal;letter-spacing:0.000px;transform:translate(-50%,-50%);letter-spacing:-0.300px;">31</span>
<svg class="a" style="left:1243.7px;top:218.300px" width="16.800" height="16.800" viewBox="0 0 16 16"><rect width="16" height="16" rx="1.800" fill="#f5ba3c"/><circle cx="8" cy="7" r="2.900" fill="#fff"/><rect x="6.300" y="9" width="3.400" height="1.700" fill="#fff"/><rect x="6.300" y="11.300" width="3.400" height="1" fill="#fff"/></svg>
<svg class="a" style="left:1243.5px;top:267.500px" width="17" height="17" viewBox="0 0 17 17"><circle cx="8" cy="9" r="5.800" fill="none" stroke="#3b78e7" stroke-width="2.200"/><path d="M5.300 8.800l2.200 2.200 4.600-4.800" fill="none" stroke="#3b78e7" stroke-width="2"/><circle cx="13.800" cy="3.600" r="2" fill="#3b78e7"/></svg>
<svg class="a" style="left:1245px;top:318.500px" width="14" height="15" viewBox="0 0 14 15"><circle cx="7" cy="3.500" r="3" fill="#2457d6"/><path d="M.8 14.300v-2.200c0-2.300 2.800-3.900 6.200-3.900s6.200 1.600 6.200 3.900v2.200z" fill="#7ea3f0"/><path d="M2.800 14.300v-4.600c1.100-.9 2.600-1.500 4.200-1.500s3.100.6 4.200 1.500v4.600z" fill="#2457d6"/></svg>
<svg class="a" style="left:1245.5px;top:367px" width="13" height="18" viewBox="0 0 13 18"><path d="M6.500.500A6 6 0 0 0 .5 6.500c0 4 4.500 6.800 6 11 1.500-4.200 6-7 6-11a6 6 0 0 0-6-6z" fill="#34a853"/><path d="M6.500.500A6 6 0 0 0 .5 6.500c0 1 .3 2 .8 2.900L9.600 1.400A6 6 0 0 0 6.500.500z" fill="#ea4335"/><path d="M1.300 9.400c.8 1.500 2 2.800 3.100 4.300l7.300-10.300a6 6 0 0 0-2.100-2z" fill="#fbbc04"/><path d="M11.700 3.400L4.400 13.700c.9 1.200 1.700 2.400 2.100 3.800 1.500-4.200 6-7 6-11 0-1.100-.3-2.200-.8-3.100z" fill="#34a853"/><path d="M1.300 9.400L6.500 4 3 1.800A6 6 0 0 0 .5 6.500c0 1 .3 2 .8 2.900z" fill="#4285f4"/><circle cx="6.500" cy="6.400" r="2.100" fill="#fff"/></svg>
<div class="a" style="left:1243px;top:415px;width:18px;height:1px;background:#dadce0"></div>
<svg class="a" style="left:1245.5px;top:448.500px" width="13" height="13" viewBox="0 0 13 13"><path d="M6.500.500v12M.5 6.500h12" stroke="#1f1f1f" stroke-width="1.500"/></svg>
<div class="a" style="left:1217px;top:225.500px;width:10.500px;height:540px;background:#fff;border-left:1px solid #e4e4e4"></div>
<div class="a" style="left:1217px;top:225.500px;width:10.500px;height:20.800px;background:#f8f9fa;border-left:1px solid #d5d5d5;border-bottom:1px solid #d5d5d5"></div>
<div class="a" style="left:1218.500px;top:355px;width:7.500px;height:81px;border-radius:4px;background:#dadce0"></div>
<div class="a" style="left:1217px;top:725px;width:10.500px;height:14.500px;background:#f8f9fa;border:1px solid #ebebeb"></div>
<div class="a" style="left:1217px;top:739.5px;width:10.500px;height:14.500px;background:#f8f9fa;border:1px solid #ebebeb"></div>
<div class="a" style="left:1219.500px;top:730.500px;border-left:2.700px solid transparent;border-right:2.700px solid transparent;border-bottom:3px solid #8a8a8a"></div>
<div class="a" style="left:1219.500px;top:745.500px;border-left:2.700px solid transparent;border-right:2.700px solid transparent;border-top:3px solid #8a8a8a"></div>
<div class="a" style="left:0;top:754px;width:1227.500px;height:11.500px;background:#fff;border-top:1px solid #e3e3e3;border-bottom:1px solid #e0e0e0"></div>
<div class="a" style="left:0;top:754px;width:40.500px;height:11.500px;background:#f8f9fa;border-right:1px solid #cccccc;border-top:1px solid #e3e3e3;border-bottom:1px solid #e0e0e0"></div>
<div class="a" style="left:43px;top:755.800px;width:914.800px;height:7.600px;border-radius:4px;background:#dadce0"></div>
<div class="a" style="left:1189.4px;top:754px;width:14px;height:11.500px;background:#f8f9fa;border:1px solid #ebebeb"></div>
<div class="a" style="left:1203.4px;top:754px;width:14px;height:11.500px;background:#f8f9fa;border:1px solid #ebebeb"></div>
<div class="a" style="left:1217px;top:754px;width:10.500px;height:11.500px;background:#f8f9fa;border:1px solid #ebebeb"></div>
<div class="a" style="left:1194.500px;top:757px;border-top:2.700px solid transparent;border-bottom:2.700px solid transparent;border-right:3px solid #777"></div>
<div class="a" style="left:1209.500px;top:757px;border-top:2.700px solid transparent;border-bottom:2.700px solid transparent;border-left:3px solid #777"></div>
<div id="grid"><div class="in">
<div class="c" style="left:0.00px;top:225.50px;width:40.60px;height:20.75px;background:#f8f9fa;border-right:4.300px solid #c6c6c6;border-bottom:3.500px solid #c6c6c6"></div>
<div class="c" style="left:40.50px;top:225.50px;width:1559.50px;height:20.75px;background:#d3e3fd;"></div>
<div class="vl" style="left:69.25px;top:225.50px;height:20.75px;width:1px;background:#c0c0c0"></div>
<span class="t" style="left:55.12px;top:236.90px;color:#0b1d40;font-size:10.4px;font-weight:bold;font-style:normal;letter-spacing:0.000px;transform:translate(-50%,-50%);">A</span>
<div class="vl" style="left:93.25px;top:225.50px;height:20.75px;width:1px;background:#c0c0c0"></div>
<span class="t" style="left:81.75px;top:236.90px;color:#0b1d40;font-size:10.4px;font-weight:bold;font-style:normal;letter-spacing:0.000px;transform:translate(-50%,-50%);">B</span>
<div class="vl" style="left:280.00px;top:225.50px;height:20.75px;width:1px;background:#c0c0c0"></div>
<span class="t" style="left:187.12px;top:236.90px;color:#0b1d40;font-size:10.4px;font-weight:bold;font-style:normal;letter-spacing:0.000px;transform:translate(-50%,-50%);">C</span>
<div class="vl" style="left:348.44px;top:225.50px;height:20.75px;width:1px;background:#c0c0c0"></div>
<span class="t" style="left:314.72px;top:236.90px;color:#0b1d40;font-size:10.4px;font-weight:bold;font-style:normal;letter-spacing:0.000px;transform:translate(-50%,-50%);">D</span>
<div class="vl" style="left:416.88px;top:225.50px;height:20.75px;width:1px;background:#c0c0c0"></div>
<span class="t" style="left:383.16px;top:236.90px;color:#0b1d40;font-size:10.4px;font-weight:bold;font-style:normal;letter-spacing:0.000px;transform:translate(-50%,-50%);">E</span>
<div class="vl" style="left:485.32px;top:225.50px;height:20.75px;width:1px;background:#c0c0c0"></div>
<span class="t" style="left:451.60px;top:236.90px;color:#0b1d40;font-size:10.4px;font-weight:bold;font-style:normal;letter-spacing:0.000px;transform:translate(-50%,-50%);">F</span>
<div class="vl" style="left:553.76px;top:225.50px;height:20.75px;width:1px;background:#c0c0c0"></div>
<span class="t" style="left:520.04px;top:236.90px;color:#0b1d40;font-size:10.4px;font-weight:bold;font-style:normal;letter-spacing:0.000px;transform:translate(-50%,-50%);">G</span>
<div class="vl" style="left:622.20px;top:225.50px;height:20.75px;width:1px;background:#c0c0c0"></div>
<span class="t" style="left:588.48px;top:236.90px;color:#0b1d40;font-size:10.4px;font-weight:bold;font-style:normal;letter-spacing:0.000px;transform:translate(-50%,-50%);">H</span>
<div class="vl" style="left:690.64px;top:225.50px;height:20.75px;width:1px;background:#c0c0c0"></div>
<span class="t" style="left:656.92px;top:236.90px;color:#0b1d40;font-size:10.4px;font-weight:bold;font-style:normal;letter-spacing:0.000px;transform:translate(-50%,-50%);">I</span>
<div class="vl" style="left:759.08px;top:225.50px;height:20.75px;width:1px;background:#c0c0c0"></div>
<span class="t" style="left:725.36px;top:236.90px;color:#0b1d40;font-size:10.4px;font-weight:bold;font-style:normal;letter-spacing:0.000px;transform:translate(-50%,-50%);">J</span>
<div class="vl" style="left:827.52px;top:225.50px;height:20.75px;width:1px;background:#c0c0c0"></div>
<span class="t" style="left:793.80px;top:236.90px;color:#0b1d40;font-size:10.4px;font-weight:bold;font-style:normal;letter-spacing:0.000px;transform:translate(-50%,-50%);">K</span>
<div class="vl" style="left:895.96px;top:225.50px;height:20.75px;width:1px;background:#c0c0c0"></div>
<span class="t" style="left:862.24px;top:236.90px;color:#0b1d40;font-size:10.4px;font-weight:bold;font-style:normal;letter-spacing:0.000px;transform:translate(-50%,-50%);">L</span>
<div class="vl" style="left:964.40px;top:225.50px;height:20.75px;width:1px;background:#c0c0c0"></div>
<span class="t" style="left:930.68px;top:236.90px;color:#0b1d40;font-size:10.4px;font-weight:bold;font-style:normal;letter-spacing:0.000px;transform:translate(-50%,-50%);">M</span>
<div class="vl" style="left:1032.84px;top:225.50px;height:20.75px;width:1px;background:#c0c0c0"></div>
<span class="t" style="left:999.12px;top:236.90px;color:#0b1d40;font-size:10.4px;font-weight:bold;font-style:normal;letter-spacing:0.000px;transform:translate(-50%,-50%);">N</span>
<div class="vl" style="left:1101.28px;top:225.50px;height:20.75px;width:1px;background:#c0c0c0"></div>
<span class="t" style="left:1067.56px;top:236.90px;color:#0b1d40;font-size:10.4px;font-weight:bold;font-style:normal;letter-spacing:0.000px;transform:translate(-50%,-50%);">O</span>
<div class="vl" style="left:1169.72px;top:225.50px;height:20.75px;width:1px;background:#c0c0c0"></div>
<span class="t" style="left:1136.00px;top:236.90px;color:#0b1d40;font-size:10.4px;font-weight:bold;font-style:normal;letter-spacing:0.000px;transform:translate(-50%,-50%);">P</span>
<div class="vl" style="left:1238.16px;top:225.50px;height:20.75px;width:1px;background:#c0c0c0"></div>
<span class="t" style="left:1204.44px;top:236.90px;color:#0b1d40;font-size:10.4px;font-weight:bold;font-style:normal;letter-spacing:0.000px;transform:translate(-50%,-50%);">Q</span>
<div class="hl" style="left:40.50px;top:225.40px;width:1559.50px;height:0.8px;background:#c7c7c7"></div>
<div class="c" style="left:0.00px;top:246.25px;width:40.50px;height:553.75px;background:#fff;"></div>
<span class="t" style="left:19.80px;top:254.35px;color:#575a5e;font-size:10.1px;font-weight:normal;font-style:normal;letter-spacing:0.000px;transform:translate(-50%,-50%);">26</span>
<div class="hl" style="left:0.00px;top:264.75px;width:40.50px;height:1px;background:#d9d9d9"></div>
<span class="t" style="left:19.80px;top:276.68px;color:#575a5e;font-size:10.1px;font-weight:normal;font-style:normal;letter-spacing:0.000px;transform:translate(-50%,-50%);">27</span>
<div class="hl" style="left:0.00px;top:287.00px;width:40.50px;height:1px;background:#d9d9d9"></div>
<span class="t" style="left:19.80px;top:298.90px;color:#575a5e;font-size:10.1px;font-weight:normal;font-style:normal;letter-spacing:0.000px;transform:translate(-50%,-50%);">28</span>
<div class="hl" style="left:0.00px;top:309.20px;width:40.50px;height:1px;background:#d9d9d9"></div>
<span class="t" style="left:19.80px;top:321.10px;color:#575a5e;font-size:10.1px;font-weight:normal;font-style:normal;letter-spacing:0.000px;transform:translate(-50%,-50%);">29</span>
<div class="hl" style="left:0.00px;top:331.40px;width:40.50px;height:1px;background:#d9d9d9"></div>
<span class="t" style="left:19.80px;top:343.30px;color:#575a5e;font-size:10.1px;font-weight:normal;font-style:normal;letter-spacing:0.000px;transform:translate(-50%,-50%);">30</span>
<div class="hl" style="left:0.00px;top:353.60px;width:40.50px;height:1px;background:#d9d9d9"></div>
<span class="t" style="left:19.80px;top:365.50px;color:#575a5e;font-size:10.1px;font-weight:normal;font-style:normal;letter-spacing:0.000px;transform:translate(-50%,-50%);">31</span>
<div class="hl" style="left:0.00px;top:375.80px;width:40.50px;height:1px;background:#d9d9d9"></div>
<span class="t" style="left:19.80px;top:387.70px;color:#575a5e;font-size:10.1px;font-weight:normal;font-style:normal;letter-spacing:0.000px;transform:translate(-50%,-50%);">32</span>
<div class="hl" style="left:0.00px;top:398.00px;width:40.50px;height:1px;background:#d9d9d9"></div>
<span class="t" style="left:19.80px;top:409.85px;color:#575a5e;font-size:10.1px;font-weight:normal;font-style:normal;letter-spacing:0.000px;transform:translate(-50%,-50%);">33</span>
<div class="hl" style="left:0.00px;top:420.10px;width:40.50px;height:1px;background:#d9d9d9"></div>
<span class="t" style="left:19.80px;top:428.65px;color:#575a5e;font-size:10.1px;font-weight:normal;font-style:normal;letter-spacing:0.000px;transform:translate(-50%,-50%);">34</span>
<div class="hl" style="left:0.00px;top:435.60px;width:40.50px;height:1px;background:#d9d9d9"></div>
<span class="t" style="left:19.80px;top:449.20px;color:#575a5e;font-size:10.1px;font-weight:normal;font-style:normal;letter-spacing:0.000px;transform:translate(-50%,-50%);">35</span>
<div class="hl" style="left:0.00px;top:461.20px;width:40.50px;height:1px;background:#d9d9d9"></div>
<span class="t" style="left:19.80px;top:471.75px;color:#575a5e;font-size:10.1px;font-weight:normal;font-style:normal;letter-spacing:0.000px;transform:translate(-50%,-50%);">36</span>
<div class="hl" style="left:0.00px;top:480.70px;width:40.50px;height:1px;background:#d9d9d9"></div>
<span class="t" style="left:19.80px;top:491.20px;color:#575a5e;font-size:10.1px;font-weight:normal;font-style:normal;letter-spacing:0.000px;transform:translate(-50%,-50%);">37</span>
<div class="hl" style="left:0.00px;top:500.10px;width:40.50px;height:1px;background:#d9d9d9"></div>
<span class="t" style="left:19.80px;top:510.70px;color:#575a5e;font-size:10.1px;font-weight:normal;font-style:normal;letter-spacing:0.000px;transform:translate(-50%,-50%);">38</span>
<div class="hl" style="left:0.00px;top:519.70px;width:40.50px;height:1px;background:#d9d9d9"></div>
<span class="t" style="left:19.80px;top:530.25px;color:#575a5e;font-size:10.1px;font-weight:normal;font-style:normal;letter-spacing:0.000px;transform:translate(-50%,-50%);">39</span>
<div class="hl" style="left:0.00px;top:539.20px;width:40.50px;height:1px;background:#d9d9d9"></div>
<span class="t" style="left:19.80px;top:549.80px;color:#575a5e;font-size:10.1px;font-weight:normal;font-style:normal;letter-spacing:0.000px;transform:translate(-50%,-50%);">40</span>
<div class="hl" style="left:0.00px;top:558.80px;width:40.50px;height:1px;background:#d9d9d9"></div>
<span class="t" style="left:19.80px;top:569.40px;color:#575a5e;font-size:10.1px;font-weight:normal;font-style:normal;letter-spacing:0.000px;transform:translate(-50%,-50%);">41</span>
<div class="hl" style="left:0.00px;top:578.40px;width:40.50px;height:1px;background:#d9d9d9"></div>
<span class="t" style="left:19.80px;top:589.00px;color:#575a5e;font-size:10.1px;font-weight:normal;font-style:normal;letter-spacing:0.000px;transform:translate(-50%,-50%);">42</span>
<div class="hl" style="left:0.00px;top:598.00px;width:40.50px;height:1px;background:#d9d9d9"></div>
<span class="t" style="left:19.80px;top:608.55px;color:#575a5e;font-size:10.1px;font-weight:normal;font-style:normal;letter-spacing:0.000px;transform:translate(-50%,-50%);">43</span>
<div class="hl" style="left:0.00px;top:617.50px;width:40.50px;height:1px;background:#d9d9d9"></div>
<span class="t" style="left:19.80px;top:628.00px;color:#575a5e;font-size:10.1px;font-weight:normal;font-style:normal;letter-spacing:0.000px;transform:translate(-50%,-50%);">44</span>
<div class="hl" style="left:0.00px;top:636.90px;width:40.50px;height:1px;background:#d9d9d9"></div>
<span class="t" style="left:19.80px;top:647.65px;color:#575a5e;font-size:10.1px;font-weight:normal;font-style:normal;letter-spacing:0.000px;transform:translate(-50%,-50%);">45</span>
<div class="hl" style="left:0.00px;top:656.80px;width:40.50px;height:1px;background:#d9d9d9"></div>
<span class="t" style="left:19.80px;top:667.30px;color:#575a5e;font-size:10.1px;font-weight:normal;font-style:normal;letter-spacing:0.000px;transform:translate(-50%,-50%);">46</span>
<div class="hl" style="left:0.00px;top:676.20px;width:40.50px;height:1px;background:#d9d9d9"></div>
<div class="c" style="left:0.00px;top:676.70px;width:40.50px;height:25.10px;background:#d3e3fd;"></div>
<span class="t" style="left:19.80px;top:689.55px;color:#0b1d40;font-size:10.1px;font-weight:bold;font-style:normal;letter-spacing:0.000px;transform:translate(-50%,-50%);">47</span>
<div class="hl" style="left:0.00px;top:701.30px;width:40.50px;height:1px;background:#d9d9d9"></div>
<span class="t" style="left:19.80px;top:712.00px;color:#575a5e;font-size:10.1px;font-weight:normal;font-style:normal;letter-spacing:0.000px;transform:translate(-50%,-50%);">48</span>
<div class="hl" style="left:0.00px;top:721.10px;width:40.50px;height:1px;background:#d9d9d9"></div>
<span class="t" style="left:19.80px;top:731.60px;color:#575a5e;font-size:10.1px;font-weight:normal;font-style:normal;letter-spacing:0.000px;transform:translate(-50%,-50%);">49</span>
<div class="hl" style="left:0.00px;top:740.50px;width:40.50px;height:1px;background:#d9d9d9"></div>
<span class="t" style="left:19.80px;top:751.05px;color:#575a5e;font-size:10.1px;font-weight:normal;font-style:normal;letter-spacing:0.000px;transform:translate(-50%,-50%);">50</span>
<div class="hl" style="left:0.00px;top:760.00px;width:40.50px;height:1px;background:#d9d9d9"></div>
<div class="vl" style="left:40.00px;top:246.25px;height:553.75px;width:1px;background:#cccccc"></div>
<div class="c" style="left:40.50px;top:246.25px;width:240.00px;height:19.00px;background:#a9bff0;"></div>
<div class="c" style="left:280.50px;top:246.25px;width:68.44px;height:19.00px;background:#e0b8b4;"></div>
<div class="c" style="left:40.50px;top:265.25px;width:240.00px;height:155.35px;background:#4977d0;"></div>
<div class="c" style="left:40.50px;top:436.10px;width:1559.50px;height:25.60px;background:#4977d0;"></div>
<div class="c" style="left:40.50px;top:461.70px;width:1559.50px;height:19.50px;background:#fbe5a3;"></div>
<div class="c" style="left:40.50px;top:676.70px;width:1559.50px;height:25.10px;background:#4977d0;"></div>
<div class="c" style="left:40.50px;top:701.80px;width:1559.50px;height:19.80px;background:#fbe5a3;"></div>
<div class="hl" style="left:40.50px;top:461.30px;width:1559.50px;height:0.8px;background:#1d2f5c"></div>
<div class="hl" style="left:40.50px;top:264.75px;width:1559.50px;height:1.0px;background:#000"></div>
<div class="hl" style="left:93.75px;top:287.00px;width:1506.25px;height:1.0px;background:#000"></div>
<div class="hl" style="left:69.75px;top:309.20px;width:1530.25px;height:1.0px;background:#000"></div>
<div class="hl" style="left:93.75px;top:331.40px;width:1506.25px;height:1.0px;background:#000"></div>
<div class="hl" style="left:93.75px;top:353.60px;width:1506.25px;height:1.0px;background:#000"></div>
<div class="hl" style="left:93.75px;top:375.80px;width:1506.25px;height:1.0px;background:#000"></div>
<div class="hl" style="left:93.75px;top:398.00px;width:1506.25px;height:1.0px;background:#000"></div>
<div class="hl" style="left:40.50px;top:420.10px;width:1559.50px;height:1.0px;background:#000"></div>
<div class="vl" style="left:69.25px;top:246.25px;height:174.35px;width:1.0px;background:#000"></div>
<div class="vl" style="left:93.25px;top:246.25px;height:174.35px;width:1.0px;background:#000"></div>
<div class="vl" style="left:280.00px;top:246.25px;height:174.35px;width:1.0px;background:#000"></div>
<div class="vl" style="left:348.44px;top:246.25px;height:174.35px;width:1.0px;background:#000"></div>
<div class="vl" style="left:416.88px;top:246.25px;height:174.35px;width:1.0px;background:#000"></div>
<div class="vl" style="left:485.32px;top:246.25px;height:174.35px;width:1.0px;background:#000"></div>
<div class="vl" style="left:553.76px;top:246.25px;height:174.35px;width:1.0px;background:#000"></div>
<div class="vl" style="left:622.20px;top:246.25px;height:174.35px;width:1.0px;background:#000"></div>
<div class="vl" style="left:690.64px;top:246.25px;height:174.35px;width:1.0px;background:#000"></div>
<div class="vl" style="left:759.08px;top:246.25px;height:174.35px;width:1.0px;background:#000"></div>
<div class="vl" style="left:827.52px;top:246.25px;height:174.35px;width:1.0px;background:#000"></div>
<div class="vl" style="left:895.96px;top:246.25px;height:174.35px;width:1.0px;background:#000"></div>
<div class="vl" style="left:964.40px;top:246.25px;height:174.35px;width:1.0px;background:#000"></div>
<div class="vl" style="left:1032.84px;top:246.25px;height:174.35px;width:1.0px;background:#000"></div>
<div class="vl" style="left:1101.28px;top:246.25px;height:174.35px;width:1.0px;background:#000"></div>
<div class="vl" style="left:1169.72px;top:246.25px;height:174.35px;width:1.0px;background:#000"></div>
<div class="vl" style="left:1238.16px;top:246.25px;height:174.35px;width:1.0px;background:#000"></div>
<div class="vl" style="left:1306.60px;top:246.25px;height:174.35px;width:1.0px;background:#000"></div>
<div class="vl" style="left:1375.04px;top:246.25px;height:174.35px;width:1.0px;background:#000"></div>
<div class="vl" style="left:1443.48px;top:246.25px;height:174.35px;width:1.0px;background:#000"></div>
<div class="hl" style="left:40.50px;top:480.70px;width:1559.50px;height:1px;background:#222"></div>
<div class="hl" style="left:40.50px;top:500.10px;width:1559.50px;height:1px;background:#222"></div>
<div class="hl" style="left:40.50px;top:519.70px;width:1559.50px;height:1px;background:#222"></div>
<div class="hl" style="left:40.50px;top:539.20px;width:1559.50px;height:1px;background:#222"></div>
<div class="hl" style="left:40.50px;top:558.80px;width:1559.50px;height:1px;background:#222"></div>
<div class="hl" style="left:40.50px;top:578.40px;width:1559.50px;height:1px;background:#222"></div>
<div class="hl" style="left:40.50px;top:598.00px;width:1559.50px;height:1px;background:#222"></div>
<div class="hl" style="left:40.50px;top:617.50px;width:1559.50px;height:1px;background:#222"></div>
<div class="hl" style="left:40.50px;top:636.90px;width:1559.50px;height:1px;background:#222"></div>
<div class="vl" style="left:280.00px;top:461.70px;height:175.70px;width:1.0px;background:#000"></div>
<div class="vl" style="left:348.44px;top:461.70px;height:175.70px;width:1.0px;background:#000"></div>
<div class="hl" style="left:280.50px;top:656.60px;width:68.44px;height:1.4px;background:#000"></div>
<div class="hl" style="left:40.50px;top:721.10px;width:992.84px;height:1.0px;background:#000"></div>
<div class="hl" style="left:40.50px;top:740.50px;width:992.84px;height:1.0px;background:#000"></div>
<div class="vl" style="left:280.00px;top:721.60px;height:38.90px;width:1.0px;background:#000"></div>
<div class="vl" style="left:416.88px;top:721.60px;height:38.90px;width:1.0px;background:#000"></div>
<div class="vl" style="left:1032.84px;top:721.60px;height:38.90px;width:1.0px;background:#000"></div>
<span class="t" style="left:187.24px;top:254.15px;color:#fff;font-size:10.67px;font-weight:bold;font-style:normal;letter-spacing:-0.364px;transform:translate(-50%,-50%);">Fundraisers</span>
<span class="t" style="left:187.44px;top:276.38px;color:#fff;font-size:10.67px;font-weight:bold;font-style:normal;letter-spacing:0.034px;transform:translate(-50%,-50%);">Article Counter</span>
<span class="t" style="left:187.42px;top:298.60px;color:#fff;font-size:10.67px;font-weight:bold;font-style:normal;letter-spacing:-0.001px;transform:translate(-50%,-50%);">Visual Counter</span>
<span class="t" style="left:187.44px;top:320.80px;color:#fff;font-size:10.67px;font-weight:bold;font-style:normal;letter-spacing:0.026px;transform:translate(-50%,-50%);">Club or Officer</span>
<span class="t" style="left:187.27px;top:343.00px;color:#fff;font-size:10.67px;font-weight:bold;font-style:normal;letter-spacing:-0.304px;transform:translate(-50%,-50%);">LTG Visitation</span>
<span class="t" style="left:187.31px;top:365.20px;color:#fff;font-size:10.67px;font-weight:bold;font-style:normal;letter-spacing:-0.226px;transform:translate(-50%,-50%);">MRF On Time</span>
<span class="t" style="left:187.37px;top:387.40px;color:#fff;font-size:10.67px;font-weight:bold;font-style:normal;letter-spacing:-0.110px;transform:translate(-50%,-50%);">Officer Training</span>
<span class="t" style="left:187.43px;top:409.55px;color:#fff;font-size:10.67px;font-weight:bold;font-style:normal;letter-spacing:0.000px;transform:translate(-50%,-50%);">RTC Attendance</span>
<span class="t" style="left:314.72px;top:254.15px;color:#000;font-size:10.67px;font-weight:normal;font-style:normal;letter-spacing:0.000px;transform:translate(-50%,-50%);">0</span>
<span class="t" style="left:383.16px;top:254.15px;color:#000;font-size:10.67px;font-weight:normal;font-style:normal;letter-spacing:0.000px;transform:translate(-50%,-50%);">2</span>
<span class="t" style="left:520.04px;top:254.15px;color:#000;font-size:10.67px;font-weight:normal;font-style:normal;letter-spacing:0.000px;transform:translate(-50%,-50%);">0</span>
<span class="t" style="left:588.48px;top:254.15px;color:#000;font-size:10.67px;font-weight:normal;font-style:normal;letter-spacing:0.000px;transform:translate(-50%,-50%);">0</span>
<span class="t" style="left:656.92px;top:254.15px;color:#000;font-size:10.67px;font-weight:normal;font-style:normal;letter-spacing:0.000px;transform:translate(-50%,-50%);">1</span>
<span class="t" style="left:725.36px;top:254.15px;color:#000;font-size:10.67px;font-weight:normal;font-style:normal;letter-spacing:0.000px;transform:translate(-50%,-50%);">1</span>
<span class="t" style="left:862.24px;top:254.15px;color:#000;font-size:10.67px;font-weight:normal;font-style:normal;letter-spacing:0.000px;transform:translate(-50%,-50%);">0</span>
<span class="t" style="left:314.72px;top:276.38px;color:#000;font-size:10.67px;font-weight:normal;font-style:normal;letter-spacing:0.000px;transform:translate(-50%,-50%);">1</span>
<span class="t" style="left:383.16px;top:276.38px;color:#000;font-size:10.67px;font-weight:normal;font-style:normal;letter-spacing:0.000px;transform:translate(-50%,-50%);">1</span>
<span class="t" style="left:520.04px;top:276.38px;color:#000;font-size:10.67px;font-weight:normal;font-style:normal;letter-spacing:0.000px;transform:translate(-50%,-50%);">1</span>
<span class="t" style="left:588.48px;top:276.38px;color:#000;font-size:10.67px;font-weight:normal;font-style:normal;letter-spacing:0.000px;transform:translate(-50%,-50%);">0</span>
<span class="t" style="left:656.92px;top:276.38px;color:#000;font-size:10.67px;font-weight:normal;font-style:normal;letter-spacing:0.000px;transform:translate(-50%,-50%);">1</span>
<span class="t" style="left:725.36px;top:276.38px;color:#000;font-size:10.67px;font-weight:normal;font-style:normal;letter-spacing:0.000px;transform:translate(-50%,-50%);">1</span>
<span class="t" style="left:862.24px;top:276.38px;color:#000;font-size:10.67px;font-weight:normal;font-style:normal;letter-spacing:0.000px;transform:translate(-50%,-50%);">3</span>
<span class="t" style="left:314.72px;top:298.60px;color:#000;font-size:10.67px;font-weight:normal;font-style:normal;letter-spacing:0.000px;transform:translate(-50%,-50%);">1</span>
<span class="t" style="left:383.16px;top:298.60px;color:#000;font-size:10.67px;font-weight:normal;font-style:normal;letter-spacing:0.000px;transform:translate(-50%,-50%);">1</span>
<span class="t" style="left:520.04px;top:298.60px;color:#000;font-size:10.67px;font-weight:normal;font-style:normal;letter-spacing:0.000px;transform:translate(-50%,-50%);">1</span>
<span class="t" style="left:588.48px;top:298.60px;color:#000;font-size:10.67px;font-weight:normal;font-style:normal;letter-spacing:0.000px;transform:translate(-50%,-50%);">1</span>
<span class="t" style="left:656.92px;top:298.60px;color:#000;font-size:10.67px;font-weight:normal;font-style:normal;letter-spacing:0.000px;transform:translate(-50%,-50%);">1</span>
<span class="t" style="left:725.36px;top:298.60px;color:#000;font-size:10.67px;font-weight:normal;font-style:normal;letter-spacing:0.000px;transform:translate(-50%,-50%);">1</span>
<span class="t" style="left:862.24px;top:298.60px;color:#000;font-size:10.67px;font-weight:normal;font-style:normal;letter-spacing:0.000px;transform:translate(-50%,-50%);">15</span>
<span class="t" style="left:314.72px;top:320.80px;color:#000;font-size:10.67px;font-weight:normal;font-style:normal;letter-spacing:0.000px;transform:translate(-50%,-50%);">yes</span>
<span class="t" style="left:383.16px;top:320.80px;color:#000;font-size:10.67px;font-weight:normal;font-style:normal;letter-spacing:0.000px;transform:translate(-50%,-50%);">no</span>
<span class="t" style="left:520.04px;top:320.80px;color:#000;font-size:10.67px;font-weight:normal;font-style:normal;letter-spacing:0.000px;transform:translate(-50%,-50%);">yes</span>
<span class="t" style="left:588.48px;top:320.80px;color:#000;font-size:10.67px;font-weight:normal;font-style:normal;letter-spacing:0.000px;transform:translate(-50%,-50%);">no</span>
<span class="t" style="left:656.92px;top:320.80px;color:#000;font-size:10.67px;font-weight:normal;font-style:normal;letter-spacing:0.000px;transform:translate(-50%,-50%);">yes</span>
<span class="t" style="left:725.36px;top:320.80px;color:#000;font-size:10.67px;font-weight:normal;font-style:normal;letter-spacing:0.000px;transform:translate(-50%,-50%);">no</span>
<span class="t" style="left:862.24px;top:320.80px;color:#000;font-size:10.67px;font-weight:normal;font-style:normal;letter-spacing:0.000px;transform:translate(-50%,-50%);">yes</span>
<span class="t" style="left:314.72px;top:387.40px;color:#000;font-size:10.67px;font-weight:normal;font-style:normal;letter-spacing:0.000px;transform:translate(-50%,-50%);">no</span>
<span class="t" style="left:383.16px;top:387.40px;color:#000;font-size:10.67px;font-weight:normal;font-style:normal;letter-spacing:0.000px;transform:translate(-50%,-50%);">no</span>
<span class="t" style="left:520.04px;top:387.40px;color:#000;font-size:10.67px;font-weight:normal;font-style:normal;letter-spacing:0.000px;transform:translate(-50%,-50%);">no</span>
<span class="t" style="left:588.48px;top:387.40px;color:#000;font-size:10.67px;font-weight:normal;font-style:normal;letter-spacing:0.000px;transform:translate(-50%,-50%);">no</span>
<span class="t" style="left:656.92px;top:387.40px;color:#000;font-size:10.67px;font-weight:normal;font-style:normal;letter-spacing:0.000px;transform:translate(-50%,-50%);">no</span>
<span class="t" style="left:725.36px;top:387.40px;color:#000;font-size:10.67px;font-weight:normal;font-style:normal;letter-spacing:0.000px;transform:translate(-50%,-50%);">no</span>
<span class="t" style="left:862.24px;top:387.40px;color:#000;font-size:10.67px;font-weight:normal;font-style:normal;letter-spacing:0.000px;transform:translate(-50%,-50%);">no</span>
<div class="c" style="left:335.64px;top:363.90px;width:0;height:0;border-left:3.900px solid transparent;border-right:3.900px solid transparent;border-top:4px solid #808080"></div>
<span class="t" style="left:306.34px;top:365.20px;color:#000;font-size:10.67px;font-weight:normal;font-style:normal;letter-spacing:0.241px;transform:translate(-50%,-50%);">On-Time</span>
<div class="c" style="left:404.08px;top:363.90px;width:0;height:0;border-left:3.900px solid transparent;border-right:3.900px solid transparent;border-top:4px solid #808080"></div>
<span class="t" style="left:374.82px;top:365.20px;color:#000;font-size:10.67px;font-weight:normal;font-style:normal;letter-spacing:0.312px;transform:translate(-50%,-50%);">Late</span>
<div class="c" style="left:472.52px;top:363.90px;width:0;height:0;border-left:3.900px solid transparent;border-right:3.900px solid transparent;border-top:4px solid #808080"></div>
<div class="c" style="left:540.96px;top:363.90px;width:0;height:0;border-left:3.900px solid transparent;border-right:3.900px solid transparent;border-top:4px solid #808080"></div>
<span class="t" style="left:511.66px;top:365.20px;color:#000;font-size:10.67px;font-weight:normal;font-style:normal;letter-spacing:0.241px;transform:translate(-50%,-50%);">On-Time</span>
<div class="c" style="left:609.40px;top:363.90px;width:0;height:0;border-left:3.900px solid transparent;border-right:3.900px solid transparent;border-top:4px solid #808080"></div>
<span class="t" style="left:580.14px;top:365.20px;color:#000;font-size:10.67px;font-weight:normal;font-style:normal;letter-spacing:0.312px;transform:translate(-50%,-50%);">Late</span>
<div class="c" style="left:677.84px;top:363.90px;width:0;height:0;border-left:3.900px solid transparent;border-right:3.900px solid transparent;border-top:4px solid #808080"></div>
<span class="t" style="left:648.54px;top:365.20px;color:#000;font-size:10.67px;font-weight:normal;font-style:normal;letter-spacing:0.241px;transform:translate(-50%,-50%);">On-Time</span>
<div class="c" style="left:746.28px;top:363.90px;width:0;height:0;border-left:3.900px solid transparent;border-right:3.900px solid transparent;border-top:4px solid #808080"></div>
<span class="t" style="left:716.98px;top:365.20px;color:#000;font-size:10.67px;font-weight:normal;font-style:normal;letter-spacing:0.241px;transform:translate(-50%,-50%);">On-Time</span>
<div class="c" style="left:814.72px;top:363.90px;width:0;height:0;border-left:3.900px solid transparent;border-right:3.900px solid transparent;border-top:4px solid #808080"></div>
<div class="c" style="left:883.16px;top:363.90px;width:0;height:0;border-left:3.900px solid transparent;border-right:3.900px solid transparent;border-top:4px solid #808080"></div>
<span class="t" style="left:853.86px;top:365.20px;color:#000;font-size:10.67px;font-weight:normal;font-style:normal;letter-spacing:0.241px;transform:translate(-50%,-50%);">On-Time</span>
<div class="c" style="left:951.60px;top:363.90px;width:0;height:0;border-left:3.900px solid transparent;border-right:3.900px solid transparent;border-top:4px solid #808080"></div>
<div class="c" style="left:1020.04px;top:363.90px;width:0;height:0;border-left:3.900px solid transparent;border-right:3.900px solid transparent;border-top:4px solid #808080"></div>
<div class="c" style="left:1088.48px;top:363.90px;width:0;height:0;border-left:3.900px solid transparent;border-right:3.900px solid transparent;border-top:4px solid #808080"></div>
<div class="c" style="left:1156.92px;top:363.90px;width:0;height:0;border-left:3.900px solid transparent;border-right:3.900px solid transparent;border-top:4px solid #808080"></div>
<div class="c" style="left:335.64px;top:408.25px;width:0;height:0;border-left:3.900px solid transparent;border-right:3.900px solid transparent;border-top:4px solid #808080"></div>
<span class="t" style="left:306.56px;top:409.55px;color:#000;font-size:10.67px;font-weight:normal;font-style:normal;letter-spacing:0.688px;transform:translate(-50%,-50%);">No</span>
<div class="c" style="left:404.08px;top:408.25px;width:0;height:0;border-left:3.900px solid transparent;border-right:3.900px solid transparent;border-top:4px solid #808080"></div>
<span class="t" style="left:375.00px;top:409.55px;color:#000;font-size:10.67px;font-weight:normal;font-style:normal;letter-spacing:0.688px;transform:translate(-50%,-50%);">No</span>
<div class="c" style="left:472.52px;top:408.25px;width:0;height:0;border-left:3.900px solid transparent;border-right:3.900px solid transparent;border-top:4px solid #808080"></div>
<div class="c" style="left:540.96px;top:408.25px;width:0;height:0;border-left:3.900px solid transparent;border-right:3.900px solid transparent;border-top:4px solid #808080"></div>
<span class="t" style="left:511.88px;top:409.55px;color:#000;font-size:10.67px;font-weight:normal;font-style:normal;letter-spacing:0.688px;transform:translate(-50%,-50%);">No</span>
<div class="c" style="left:609.40px;top:408.25px;width:0;height:0;border-left:3.900px solid transparent;border-right:3.900px solid transparent;border-top:4px solid #808080"></div>
<span class="t" style="left:580.32px;top:409.55px;color:#000;font-size:10.67px;font-weight:normal;font-style:normal;letter-spacing:0.688px;transform:translate(-50%,-50%);">No</span>
<div class="c" style="left:677.84px;top:408.25px;width:0;height:0;border-left:3.900px solid transparent;border-right:3.900px solid transparent;border-top:4px solid #808080"></div>
<span class="t" style="left:648.76px;top:409.55px;color:#000;font-size:10.67px;font-weight:normal;font-style:normal;letter-spacing:0.688px;transform:translate(-50%,-50%);">No</span>
<div class="c" style="left:746.28px;top:408.25px;width:0;height:0;border-left:3.900px solid transparent;border-right:3.900px solid transparent;border-top:4px solid #808080"></div>
<span class="t" style="left:717.20px;top:409.55px;color:#000;font-size:10.67px;font-weight:normal;font-style:normal;letter-spacing:0.688px;transform:translate(-50%,-50%);">No</span>
<div class="c" style="left:814.72px;top:408.25px;width:0;height:0;border-left:3.900px solid transparent;border-right:3.900px solid transparent;border-top:4px solid #808080"></div>
<div class="c" style="left:883.16px;top:408.25px;width:0;height:0;border-left:3.900px solid transparent;border-right:3.900px solid transparent;border-top:4px solid #808080"></div>
<span class="t" style="left:854.08px;top:409.55px;color:#000;font-size:10.67px;font-weight:normal;font-style:normal;letter-spacing:0.688px;transform:translate(-50%,-50%);">No</span>
<div class="c" style="left:951.60px;top:408.25px;width:0;height:0;border-left:3.900px solid transparent;border-right:3.900px solid transparent;border-top:4px solid #808080"></div>
<div class="c" style="left:1020.04px;top:408.25px;width:0;height:0;border-left:3.900px solid transparent;border-right:3.900px solid transparent;border-top:4px solid #808080"></div>
<div class="c" style="left:1088.48px;top:408.25px;width:0;height:0;border-left:3.900px solid transparent;border-right:3.900px solid transparent;border-top:4px solid #808080"></div>
<div class="c" style="left:1156.92px;top:408.25px;width:0;height:0;border-left:3.900px solid transparent;border-right:3.900px solid transparent;border-top:4px solid #808080"></div>
<span class="t" style="left:56.23px;top:342.12px;color:#fff;font-size:11.5px;font-weight:bold;font-style:normal;letter-spacing:0.000px;transform:translate(-50%,-50%);transform:translate(-50%,-50%) rotate(-90deg) scaleX(0.760);">REPORTS</span>
<span class="t" style="left:81.52px;top:287.98px;color:#fff;font-size:9.6px;font-weight:normal;font-style:italic;letter-spacing:-0.464px;transform:translate(-50%,-50%);transform:translate(-50%,-50%) rotate(-90deg);">INSERT #</span>
<span class="t" style="left:776.75px;top:449.60px;color:#fff;font-size:16px;font-weight:bold;font-style:normal;letter-spacing:0.096px;transform:translate(-50%,-50%);">LTG Service Record</span>
<span class="t" style="left:776.15px;top:689.95px;color:#fff;font-size:16px;font-weight:bold;font-style:normal;letter-spacing:-0.699px;transform:translate(-50%,-50%);">LTG Business</span>
<span class="t" style="left:160.50px;top:471.45px;color:#000;font-size:10.67px;font-weight:bold;font-style:normal;letter-spacing:-0.001px;transform:translate(-50%,-50%);">Service Project</span>
<span class="t" style="left:314.63px;top:471.45px;color:#000;font-size:10.67px;font-weight:bold;font-style:normal;letter-spacing:-0.170px;transform:translate(-50%,-50%);"># of Hours</span>
<span class="t" style="left:930.68px;top:471.45px;color:#000;font-size:10.67px;font-weight:bold;font-style:normal;letter-spacing:-0.045px;transform:translate(-50%,-50%);">Description of the Project</span>
<span class="t" style="left:160.59px;top:491.30px;color:#1c1c1c;font-size:11.4px;font-weight:normal;font-style:normal;letter-spacing:0.174px;transform:translate(-50%,-50%);">Worship Team | Piano &amp; Leading</span>
<span class="t" style="left:314.72px;top:491.30px;color:#1c1c1c;font-size:11.4px;font-weight:normal;font-style:normal;letter-spacing:0.000px;transform:translate(-50%,-50%);">6</span>
<span class="t" style="left:930.56px;top:491.30px;color:#1c1c1c;font-size:11.4px;font-weight:normal;font-style:normal;letter-spacing:0.111px;transform:translate(-50%,-50%);">Was in my church's workship team playing piano and singing.</span>
<span class="t" style="left:160.54px;top:510.80px;color:#1c1c1c;font-size:11.4px;font-weight:normal;font-style:normal;letter-spacing:0.076px;transform:translate(-50%,-50%);">FFF | Food Packaging</span>
<span class="t" style="left:314.72px;top:510.80px;color:#1c1c1c;font-size:11.4px;font-weight:normal;font-style:normal;letter-spacing:0.000px;transform:translate(-50%,-50%);">2</span>
<span class="t" style="left:930.47px;top:513.40px;color:#000;font-size:10.7px;font-weight:normal;font-style:normal;letter-spacing:-0.066px;transform:translate(-50%,-50%);">Made snack bags and encouragement cards with FFF.</span>
<span class="t" style="left:160.51px;top:530.35px;color:#1c1c1c;font-size:11.4px;font-weight:normal;font-style:normal;letter-spacing:0.016px;transform:translate(-50%,-50%);">OHD | Event Set Up</span>
<span class="t" style="left:314.72px;top:530.35px;color:#1c1c1c;font-size:11.4px;font-weight:normal;font-style:normal;letter-spacing:0.000px;transform:translate(-50%,-50%);">7</span>
<span class="t" style="left:930.55px;top:530.35px;color:#1c1c1c;font-size:11.4px;font-weight:normal;font-style:normal;letter-spacing:0.103px;transform:translate(-50%,-50%);">Helped set up for One Health Day: Exploring Outbreak Education</span>
<span class="t" style="left:160.56px;top:549.90px;color:#1c1c1c;font-size:11.4px;font-weight:normal;font-style:normal;letter-spacing:0.116px;transform:translate(-50%,-50%);">OHD | Running the Event</span>
<span class="t" style="left:314.72px;top:549.90px;color:#1c1c1c;font-size:11.4px;font-weight:normal;font-style:normal;letter-spacing:0.000px;transform:translate(-50%,-50%);">6</span>
<span class="t" style="left:930.54px;top:549.90px;color:#1c1c1c;font-size:11.4px;font-weight:normal;font-style:normal;letter-spacing:0.089px;transform:translate(-50%,-50%);">During the event, I was in charge of technology, assisting presenters, and more.</span>
<span class="t" style="left:160.58px;top:569.50px;color:#1c1c1c;font-size:11.4px;font-weight:normal;font-style:normal;letter-spacing:0.155px;transform:translate(-50%,-50%);">OHD | Event Clean Up</span>
<span class="t" style="left:314.72px;top:569.50px;color:#1c1c1c;font-size:11.4px;font-weight:normal;font-style:normal;letter-spacing:0.000px;transform:translate(-50%,-50%);">4</span>
<span class="t" style="left:930.67px;top:569.50px;color:#1c1c1c;font-size:11.4px;font-weight:normal;font-style:normal;letter-spacing:0.335px;transform:translate(-50%,-50%);">Cleaned up the event</span>
<span class="t" style="left:159.98px;top:647.85px;color:#000;font-size:11.4px;font-weight:normal;font-style:italic;letter-spacing:-0.039px;transform:translate(-50%,-50%);">Total Service for this Month</span>
<span class="t" style="left:314.55px;top:647.85px;color:#000;font-size:11.4px;font-weight:bold;font-style:normal;letter-spacing:-0.336px;transform:translate(-50%,-50%);">25</span>
<span class="t" style="left:353.00px;top:647.85px;color:#000;font-size:11.4px;font-weight:normal;font-style:normal;letter-spacing:0.023px;transform:translate(0,-50%);"><b>Goal Reminder:</b> Complete a minimum of 50 hours of service <u>before</u> January</span>
<span class="t" style="left:159.54px;top:712.20px;color:#000;font-size:11.4px;font-weight:bold;font-style:normal;letter-spacing:-0.524px;transform:translate(-50%,-50%);">Club &amp; Division Relations</span>
<span class="t" style="left:283.50px;top:712.20px;color:#000;font-size:11.4px;font-weight:normal;font-style:italic;letter-spacing:0.119px;transform:translate(0,-50%);">Provide responses to the folllowing prompts. Provide data for one date; others may be cited in the comments section. Use # or Y/N only.</span>
<span class="t" style="left:160.11px;top:731.80px;color:#000;font-size:11.4px;font-weight:bold;font-style:normal;letter-spacing:-0.372px;transform:translate(-50%,-50%);">Division Council Meeting</span>
<span class="t" style="left:349.05px;top:731.80px;color:#000;font-size:11.4px;font-weight:normal;font-style:normal;letter-spacing:0.229px;transform:translate(-50%,-50%);"># Clubs in attendance</span>
<span class="t" style="left:421.50px;top:733.50px;color:#000;font-size:10px;font-weight:normal;font-style:normal;letter-spacing:0.000px;transform:translate(0,-50%);">7</span>
<span class="t" style="left:160.18px;top:749.95px;color:#000;font-size:11.4px;font-weight:bold;font-style:normal;letter-spacing:-0.232px;transform:translate(-50%,-50%);">DCM Agenda posted 24 hrs early</span>
<span class="t" style="left:349.00px;top:749.95px;color:#000;font-size:11.4px;font-weight:normal;font-style:normal;letter-spacing:0.115px;transform:translate(-50%,-50%);">Yes/No</span>
<span class="t" style="left:421.50px;top:750.00px;color:#000;font-size:10px;font-weight:normal;font-style:normal;letter-spacing:-1.339px;transform:translate(0,-50%);">YES</span>
<span class="t" style="left:1036.50px;top:740.30px;color:#000;font-size:10.67px;font-weight:bold;font-style:normal;letter-spacing:-0.073px;transform:translate(0,-50%);">~ Reminders ~</span>
<div class="c" style="left:1020px;top:748.5px;width:0;height:0;border-left:3.3px solid transparent;border-right:3.3px solid transparent;border-top:3.6px solid #7d7d7d"></div>
</div></div>
<div class="a" style="left:0;top:765.500px;width:1277.500px;height:33px;background:#f9fbfd"></div>
<svg class="a" style="left:48.500px;top:777.3px" width="11" height="11" viewBox="0 0 11 11"><path d="M5.500.500v10M.5 5.500h10" stroke="#444746" stroke-width="1.400"/></svg>
<svg class="a" style="left:83px;top:778.3px" width="13" height="9" viewBox="0 0 13 9"><path d="M.3 1h12.400M.3 4.500h12.400M.3 8h12.400" stroke="#444746" stroke-width="1.400"/></svg>
<div class="a" style="left:110.800px;top:772.500px;width:1px;height:18.300px;background:#858585"></div>
<span class="t" style="left:113.50px;top:783.30px;color:#444746;font-size:12.4px;font-weight:normal;font-style:normal;letter-spacing:0.457px;transform:translate(0,-50%);">Info</span>
<div class="a" style="left:146.30px;top:781.40px;border-left:4.200px solid transparent;border-right:4.200px solid transparent;border-top:4.200px solid #444746"></div>
<div class="a" style="left:113px;top:795.200px;width:51.30px;height:3px;background:#f3c94a"></div>
<span class="t" style="left:195.00px;top:783.30px;color:#444746;font-size:12.4px;font-weight:normal;font-style:normal;letter-spacing:0.683px;transform:translate(0,-50%);">Assistants</span>
<div class="a" style="left:267.80px;top:781.40px;border-left:4.200px solid transparent;border-right:4.200px solid transparent;border-top:4.200px solid #444746"></div>
<svg class="a" style="left:178.3px;top:776px" width="11" height="14.800" viewBox="0 0 11 14.800"><path d="M2.800 6V3.900a2.700 2.700 0 0 1 5.400 0V6" fill="none" stroke="#444746" stroke-width="1.500"/><rect x="0" y="5.500" width="11" height="9.300" rx="1.300" fill="#444746"/><circle cx="5.500" cy="10.200" r="1.250" fill="#f9fbfd"/></svg>
<div class="a" style="left:165.3px;top:795.200px;width:120.50px;height:3px;background:#f3c94a"></div>
<span class="t" style="left:298.30px;top:783.30px;color:#444746;font-size:12.4px;font-weight:normal;font-style:normal;letter-spacing:0.847px;transform:translate(0,-50%);">Directory</span>
<div class="a" style="left:365.10px;top:781.40px;border-left:4.200px solid transparent;border-right:4.200px solid transparent;border-top:4.200px solid #444746"></div>
<div class="a" style="left:286.8px;top:795.200px;width:96.50px;height:3px;background:#f3c94a"></div>
<span class="t" style="left:414.30px;top:783.30px;color:#444746;font-size:12.4px;font-weight:normal;font-style:normal;letter-spacing:0.581px;transform:translate(0,-50%);">April</span>
<div class="a" style="left:452.50px;top:781.40px;border-left:4.200px solid transparent;border-right:4.200px solid transparent;border-top:4.200px solid #444746"></div>
<svg class="a" style="left:397.5px;top:776px" width="11" height="14.800" viewBox="0 0 11 14.800"><path d="M2.800 6V3.900a2.700 2.700 0 0 1 5.400 0V6" fill="none" stroke="#444746" stroke-width="1.500"/><rect x="0" y="5.500" width="11" height="9.300" rx="1.300" fill="#444746"/><circle cx="5.500" cy="10.200" r="1.250" fill="#f9fbfd"/></svg>
<div class="a" style="left:384.3px;top:795.200px;width:86.20px;height:3px;background:#4b78d6"></div>
<span class="t" style="left:501.70px;top:783.30px;color:#444746;font-size:12.4px;font-weight:normal;font-style:normal;letter-spacing:0.193px;transform:translate(0,-50%);">May</span>
<div class="a" style="left:535.30px;top:781.40px;border-left:4.200px solid transparent;border-right:4.200px solid transparent;border-top:4.200px solid #444746"></div>
<svg class="a" style="left:484.5px;top:776px" width="11" height="14.800" viewBox="0 0 11 14.800"><path d="M2.800 6V3.900a2.700 2.700 0 0 1 5.400 0V6" fill="none" stroke="#444746" stroke-width="1.500"/><rect x="0" y="5.500" width="11" height="9.300" rx="1.300" fill="#444746"/><circle cx="5.500" cy="10.200" r="1.250" fill="#f9fbfd"/></svg>
<div class="a" style="left:471.5px;top:795.200px;width:82.30px;height:3px;background:#4b78d6"></div>
<span class="t" style="left:585.00px;top:783.30px;color:#444746;font-size:12.4px;font-weight:normal;font-style:normal;letter-spacing:0.356px;transform:translate(0,-50%);">June</span>
<div class="a" style="left:623.30px;top:781.40px;border-left:4.200px solid transparent;border-right:4.200px solid transparent;border-top:4.200px solid #444746"></div>
<svg class="a" style="left:568px;top:776px" width="11" height="14.800" viewBox="0 0 11 14.800"><path d="M2.800 6V3.900a2.700 2.700 0 0 1 5.400 0V6" fill="none" stroke="#444746" stroke-width="1.500"/><rect x="0" y="5.500" width="11" height="9.300" rx="1.300" fill="#444746"/><circle cx="5.500" cy="10.200" r="1.250" fill="#f9fbfd"/></svg>
<div class="a" style="left:554.8px;top:795.200px;width:87.20px;height:3px;background:#4b78d6"></div>
<span class="t" style="left:672.50px;top:783.30px;color:#444746;font-size:12.4px;font-weight:normal;font-style:normal;letter-spacing:0.417px;transform:translate(0,-50%);">Q1 Reflection</span>
<div class="a" style="left:763.30px;top:781.40px;border-left:4.200px solid transparent;border-right:4.200px solid transparent;border-top:4.200px solid #444746"></div>
<svg class="a" style="left:655.5px;top:776px" width="11" height="14.800" viewBox="0 0 11 14.800"><path d="M2.800 6V3.900a2.700 2.700 0 0 1 5.400 0V6" fill="none" stroke="#444746" stroke-width="1.500"/><rect x="0" y="5.500" width="11" height="9.300" rx="1.300" fill="#444746"/><circle cx="5.500" cy="10.200" r="1.250" fill="#f9fbfd"/></svg>
<div class="a" style="left:643px;top:795.200px;width:139.00px;height:3px;background:#5a3ea8"></div>
<span class="t" style="left:812.50px;top:783.30px;color:#444746;font-size:12.4px;font-weight:normal;font-style:normal;letter-spacing:0.438px;transform:translate(0,-50%);">July</span>
<div class="a" style="left:846.60px;top:781.40px;border-left:4.200px solid transparent;border-right:4.200px solid transparent;border-top:4.200px solid #444746"></div>
<svg class="a" style="left:795.5px;top:776px" width="11" height="14.800" viewBox="0 0 11 14.800"><path d="M2.800 6V3.900a2.700 2.700 0 0 1 5.400 0V6" fill="none" stroke="#444746" stroke-width="1.500"/><rect x="0" y="5.500" width="11" height="9.300" rx="1.300" fill="#444746"/><circle cx="5.500" cy="10.200" r="1.250" fill="#f9fbfd"/></svg>
<div class="a" style="left:783px;top:795.200px;width:82.00px;height:3px;background:#4b78d6"></div>
<span class="t" style="left:895.50px;top:783.30px;color:#444746;font-size:12.4px;font-weight:normal;font-style:normal;letter-spacing:0.570px;transform:translate(0,-50%);">August</span>
<div class="a" style="left:947.60px;top:781.40px;border-left:4.200px solid transparent;border-right:4.200px solid transparent;border-top:4.200px solid #444746"></div>
<svg class="a" style="left:878.8px;top:776px" width="11" height="14.800" viewBox="0 0 11 14.800"><path d="M2.800 6V3.900a2.700 2.700 0 0 1 5.400 0V6" fill="none" stroke="#444746" stroke-width="1.500"/><rect x="0" y="5.500" width="11" height="9.300" rx="1.300" fill="#444746"/><circle cx="5.500" cy="10.200" r="1.250" fill="#f9fbfd"/></svg>
<div class="a" style="left:866px;top:795.200px;width:99.50px;height:3px;background:#4b78d6"></div>
<div class="a" style="left:966.700px;top:765.700px;width:102.800px;height:32.500px;background:#e1e8f6"></div>
<div class="a" style="left:966.700px;top:795.200px;width:102.800px;height:3px;background:#3f6fd8"></div>
<svg class="a" style="left:979.3px;top:776px" width="11" height="14.800" viewBox="0 0 11 14.800"><path d="M2.800 6V3.900a2.700 2.700 0 0 1 5.400 0V6" fill="none" stroke="#2b5fd9" stroke-width="1.500"/><rect x="0" y="5.500" width="11" height="9.300" rx="1.300" fill="#2b5fd9"/><circle cx="5.500" cy="10.200" r="1.250" fill="#f9fbfd"/></svg>
<span class="t" style="left:995.50px;top:783.30px;color:#2b5fd9;font-size:12.4px;font-weight:bold;font-style:normal;letter-spacing:0.528px;transform:translate(0,-50%);">September</span>
<div class="a" style="left:1070.800px;top:773px;width:1px;height:17.500px;background:#c4c7c5"></div>
<svg class="a" style="left:1088.500px;top:777.8px" width="7" height="11" viewBox="0 0 7 11"><path d="M5.800 1L1.300 5.500 5.800 10" fill="none" stroke="#444746" stroke-width="1.500"/></svg>
<svg class="a" style="left:1123.500px;top:777.8px" width="7" height="11" viewBox="0 0 7 11"><path d="M1.200 1l4.500 4.500L1.200 10" fill="none" stroke="#444746" stroke-width="1.500"/></svg>
<svg class="a" style="left:1249.500px;top:767.500px" width="7" height="11" viewBox="0 0 7 11"><path d="M1 1l4.500 4.500L1 10" fill="none" stroke="#444746" stroke-width="1.500"/></svg>
</div>
</body></html>
